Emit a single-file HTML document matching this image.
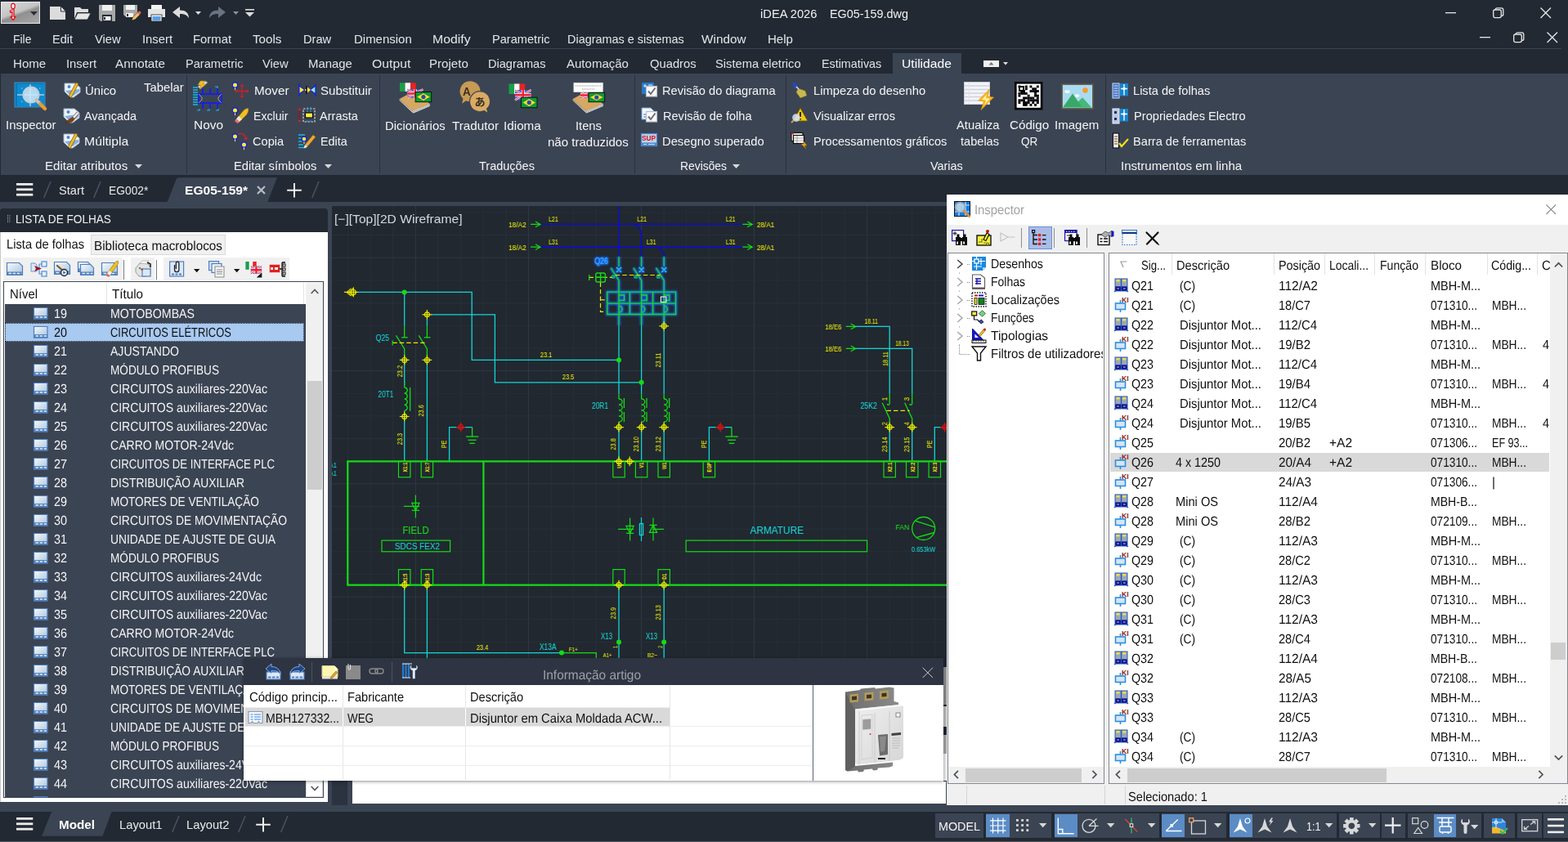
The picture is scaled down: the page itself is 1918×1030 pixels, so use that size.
<!DOCTYPE html>
<html lang="pt"><head><meta charset="utf-8"><title>iDEA 2026 EG05-159.dwg</title>
<style>
html,body{margin:0;padding:0;background:#222933;overflow:hidden}
body{width:1918px;height:1030px;position:relative;font-family:"Liberation Sans",sans-serif;font-size:15px}
#app{position:absolute;left:0;top:0;width:1918px;height:1030px;overflow:hidden;background:#222933}
#app div,#app svg{position:absolute}
.t{white-space:nowrap;line-height:20px;transform-origin:0 50%}
svg{overflow:visible}
svg text{font-family:"Liberation Sans",sans-serif}
</style></head><body><div id="app">
<div style="left:0px;top:0px;width:1918px;height:250px;background:#222933;"></div>
<div style="left:1px;top:2px;width:48px;height:27px;background:linear-gradient(160deg,#d9d9d9 0%,#c4c4c4 45%,#8f8f8f 55%,#a9a9a9 100%);border:1px solid #e8e8e8;box-sizing:border-box;"></div>
<svg style="left:1px;top:2px;" width="48" height="27" viewBox="0 0 48 27"><path d="M13 5.5 a2.2 2.2 0 1 1 4 0 a2.2 2.2 0 1 1 -4 0z" fill="#fff" stroke="#e0101a" stroke-width="1.3"/>
<path d="M11.5 11 l4.5 -1.5 v9 h2 l-3 4 l-3 -4 h2 v-6 l-2.5 .5z" fill="#fff" stroke="#e0101a" stroke-width="1.3" stroke-linejoin="round"/>
<path d="M36 12 h9 l-4.5 5z" fill="#2a2f3a"/></svg>
<svg style="left:60px;top:6px;" width="22" height="20" viewBox="0 0 22 20"><path d="M1 2 h13 l6 6 v10 h-19z" fill="#dcdcdc"/><path d="M14 2 v6 h6z" fill="#222933" opacity=".0"/><path d="M14.5 1.5 l6 6.5 h-6z" fill="#f4f4f4" stroke="#222933" stroke-width="1"/></svg>
<svg style="left:90px;top:6px;" width="22" height="20" viewBox="0 0 22 20"><path d="M1 3 h7 l2 2 h8 v4 h-14 l-3 8z" fill="#dcdcdc"/><path d="M5 10 h16 l-4 8 h-16z" fill="#e6e6e6" stroke="#222933" stroke-width=".8"/></svg>
<svg style="left:121px;top:6px;" width="20" height="20" viewBox="0 0 20 20"><path d="M0 0 h20 v20 h-18 l-2 -2z" fill="#a8a8a8"/><rect x="4" y="0" width="12" height="7" fill="#f0f0f0"/><rect x="4" y="12" width="12" height="8" fill="#222933"/><rect x="5.5" y="14" width="9" height="5" fill="#f4f4f4"/><rect x="6" y="15" width="2" height="3" fill="#222933"/></svg>
<svg style="left:151px;top:6px;" width="21" height="20" viewBox="0 0 21 20"><path d="M0 0 h17 v14 h-15 l-2 -2z" fill="#a8a8a8"/><rect x="3" y="0" width="11" height="6" fill="#f0f0f0"/><rect x="3" y="10" width="9" height="5" fill="#f4f4f4"/><rect x="4" y="11" width="2" height="3" fill="#222933"/><path d="M10 19 l1.5 -4 l6 -6 l2.8 2.8 l-6 6z" fill="#f0c060" stroke="#222933" stroke-width=".6"/><path d="M17 9.5 l1.3 -1.3 a1.5 1.5 0 0 1 2.6 2.6 l-1.2 1.3z" fill="#f06060"/></svg>
<svg style="left:181px;top:6px;" width="21" height="20" viewBox="0 0 21 20"><rect x="4" y="0" width="13" height="6" fill="#f4f4f4"/><path d="M0 5 h21 v10 h-21z" fill="#e4e4e4"/><rect x="4" y="12" width="13" height="8" fill="#f4f4f4" stroke="#222933" stroke-width=".8"/><rect x="5.5" y="14" width="10" height="5" fill="#5aa0e8"/></svg>
<svg style="left:211px;top:8px;" width="22" height="16" viewBox="0 0 22 16"><path d="M0 7 l9 -7 v4.5 c7 0 11 3 11 10 c-2 -4 -5 -5.5 -11 -5.5 v5z" fill="#dcdcdc"/></svg>
<svg style="left:239px;top:14px;" width="8" height="5" viewBox="0 0 8 5"><path d="M0 0 h7 l-3.5 4z" fill="#dcdcdc"/></svg>
<svg style="left:256px;top:8px;" width="22" height="16" viewBox="0 0 22 16"><path d="M20 7 l-9 -7 v4.5 c-7 0 -11 3 -11 10 c2 -4 5 -5.5 11 -5.5 v5z" fill="#6a7380"/></svg>
<svg style="left:285px;top:14px;" width="8" height="5" viewBox="0 0 8 5"><path d="M0 0 h7 l-3.5 4z" fill="#8a929e"/></svg>
<svg style="left:300px;top:10px;" width="12" height="11" viewBox="0 0 12 11"><rect x="0" y="1" width="11" height="1.6" fill="#dcdcdc"/><path d="M0 5 h11 l-5.5 5.5z" fill="#dcdcdc"/></svg>
<div class="t" style="left:929.5px;top:7.0px;color:#f0f0f0;transform:scaleX(0.980);">iDEA 2026</div>
<div class="t" style="left:1014.8px;top:7.0px;color:#f0f0f0;transform:scaleX(0.959);">EG05-159.dwg</div>
<svg style="left:1768px;top:15px;" width="14" height="2" viewBox="0 0 14 2"><rect x="0" y="0" width="13" height="1.3" fill="#e8e8e8"/></svg>
<svg style="left:1825.8px;top:9px;" width="14" height="14" viewBox="0 0 14 14"><rect x="0.7" y="3" width="9.6" height="9.6" rx="2" fill="none" stroke="#e8e8e8" stroke-width="1.3"/><path d="M3.2 3 v-0.2 a2 2 0 0 1 2 -2 h5.3 a2.3 2.3 0 0 1 2.3 2.3 v5.3 a2 2 0 0 1 -2 2" fill="none" stroke="#e8e8e8" stroke-width="1.3"/></svg>
<svg style="left:1884.2px;top:9px;" width="14" height="14" viewBox="0 0 14 14"><path d="M0.5 0.5 L13 13 M13 0.5 L0.5 13" stroke="#e8e8e8" stroke-width="1.3" fill="none"/></svg>
<svg style="left:1810px;top:45px;" width="14" height="2" viewBox="0 0 14 2"><rect x="0" y="0" width="13" height="1.3" fill="#e8e8e8"/></svg>
<svg style="left:1850.7px;top:39px;" width="14" height="14" viewBox="0 0 14 14"><rect x="0.7" y="3" width="9.6" height="9.6" rx="2" fill="none" stroke="#e8e8e8" stroke-width="1.3"/><path d="M3.2 3 v-0.2 a2 2 0 0 1 2 -2 h5.3 a2.3 2.3 0 0 1 2.3 2.3 v5.3 a2 2 0 0 1 -2 2" fill="none" stroke="#e8e8e8" stroke-width="1.3"/></svg>
<svg style="left:1892.2px;top:39px;" width="14" height="14" viewBox="0 0 14 14"><path d="M0.5 0.5 L13 13 M13 0.5 L0.5 13" stroke="#e8e8e8" stroke-width="1.3" fill="none"/></svg>
<div class="t" style="left:15.5px;top:37.7px;color:#e4e6ea;transform:scaleX(0.928);">File</div>
<div class="t" style="left:64.4px;top:37.7px;color:#e4e6ea;transform:scaleX(0.972);">Edit</div>
<div class="t" style="left:116.2px;top:37.7px;color:#e4e6ea;transform:scaleX(0.980);">View</div>
<div class="t" style="left:174.0px;top:37.7px;color:#e4e6ea;transform:scaleX(0.986);">Insert</div>
<div class="t" style="left:236.0px;top:37.7px;color:#e4e6ea;transform:scaleX(0.990);">Format</div>
<div class="t" style="left:309.0px;top:37.7px;color:#e4e6ea;transform:scaleX(1.012);">Tools</div>
<div class="t" style="left:371.3px;top:37.7px;color:#e4e6ea;transform:scaleX(0.977);">Draw</div>
<div class="t" style="left:432.5px;top:37.7px;color:#e4e6ea;transform:scaleX(0.998);">Dimension</div>
<div class="t" style="left:529.0px;top:37.7px;color:#e4e6ea;transform:scaleX(1.056);">Modify</div>
<div class="t" style="left:602.0px;top:37.7px;color:#e4e6ea;transform:scaleX(0.973);">Parametric</div>
<div class="t" style="left:693.5px;top:37.7px;color:#e4e6ea;transform:scaleX(0.962);">Diagramas e sistemas</div>
<div class="t" style="left:857.5px;top:37.7px;color:#e4e6ea;transform:scaleX(1.022);">Window</div>
<div class="t" style="left:938.5px;top:37.7px;color:#e4e6ea;transform:scaleX(1.003);">Help</div>
<div style="left:0px;top:59px;width:1910px;height:1px;background:#3b4453;"></div>
<div style="left:1092px;top:65px;width:84px;height:26px;background:#3b4453;"></div>
<div class="t" style="left:15.6px;top:67.7px;color:#dfe2e7;transform:scaleX(1.006);">Home</div>
<div class="t" style="left:80.9px;top:67.7px;color:#dfe2e7;transform:scaleX(0.986);">Insert</div>
<div class="t" style="left:141.4px;top:67.7px;color:#dfe2e7;transform:scaleX(1.017);">Annotate</div>
<div class="t" style="left:227.1px;top:67.7px;color:#dfe2e7;transform:scaleX(0.973);">Parametric</div>
<div class="t" style="left:320.9px;top:67.7px;color:#dfe2e7;transform:scaleX(0.980);">View</div>
<div class="t" style="left:376.9px;top:67.7px;color:#dfe2e7;transform:scaleX(0.994);">Manage</div>
<div class="t" style="left:454.9px;top:67.7px;color:#dfe2e7;transform:scaleX(1.050);">Output</div>
<div class="t" style="left:524.9px;top:67.7px;color:#dfe2e7;transform:scaleX(1.005);">Projeto</div>
<div class="t" style="left:597.2px;top:67.7px;color:#dfe2e7;transform:scaleX(0.971);">Diagramas</div>
<div class="t" style="left:693.3px;top:67.7px;color:#dfe2e7;transform:scaleX(1.001);">Automação</div>
<div class="t" style="left:795.1px;top:67.7px;color:#dfe2e7;transform:scaleX(0.984);">Quadros</div>
<div class="t" style="left:874.9px;top:67.7px;color:#dfe2e7;transform:scaleX(0.980);">Sistema eletrico</div>
<div class="t" style="left:1005.2px;top:67.7px;color:#dfe2e7;transform:scaleX(0.954);">Estimativas</div>
<div class="t" style="left:1103.1px;top:67.7px;color:#ffffff;transform:scaleX(1.044);">Utilidade</div>
<svg style="left:1203px;top:73px;" width="32" height="10" viewBox="0 0 32 10"><rect x="0" y="1" width="19" height="8" fill="#f0f0f0"/><path d="M6.5 6.5 l3 -3.5 l3 3.5z" fill="#777"/><path d="M24 3 h6 l-3 3.5z" fill="#e0e0e0"/></svg>
<div style="left:1px;top:90px;width:1917px;height:124px;background:#3b4453;"></div>
<div style="left:228px;top:92px;width:1px;height:120px;background:#2a313d;"></div>
<div style="left:464px;top:92px;width:1px;height:120px;background:#2a313d;"></div>
<div style="left:776px;top:92px;width:1px;height:120px;background:#2a313d;"></div>
<div style="left:961px;top:92px;width:1px;height:120px;background:#2a313d;"></div>
<div style="left:1352px;top:92px;width:1px;height:120px;background:#2a313d;"></div>
<svg style="left:17px;top:99px;" width="42" height="40" viewBox="0 0 42 40"><rect x="1" y="2" width="37" height="30" fill="#0a78b8" stroke="#3a8fc8" stroke-width="1"/>
<rect x="4" y="4" width="33" height="27" fill="#0e8ad0"/>
<path d="M20 4 v27 M4 17 h33" stroke="#e8f4ff" stroke-width="1"/>
<path d="M9 9 h24 M9 25 h24" stroke="#9fd4f4" stroke-width="1" stroke-dasharray="1.5 4"/>
<circle cx="21" cy="17" r="9.5" fill="#cfe8f8" fill-opacity=".85" stroke="#c8ccd4" stroke-width="2.2"/>
<path d="M28 24 l10 10" stroke="#e89a30" stroke-width="4.5" stroke-linecap="round"/>
<path d="M27 23 l4 4" stroke="#c0c4cc" stroke-width="3.5"/></svg>
<div class="t" style="left:7.0px;top:142.6px;color:#f4f4f4;transform:scaleX(0.997);">Inspector</div>
<svg style="left:78px;top:99px;" width="22" height="22" viewBox="0 0 22 22"><path d="M1 3 h13 l6 5 v6 l-8 6 h-4 l-7 -7z" fill="#eef3f8" stroke="#9fb0c4" stroke-width="1"/><path d="M2 12 l6 6 h4 l7 -5 v-3 z" fill="#86aede"/><circle cx="6.5" cy="7" r="2" fill="#4a86d0"/><path d="M6 19 l9 -17 l3 1.5 l-9 17z" fill="#f0c020" stroke="#8a5a10" stroke-width=".8"/><path d="M6 19 l0 3 l2.5 -1.5z" fill="#333"/></svg>
<div class="t" style="left:103.5px;top:100.5px;color:#f4f4f4;transform:scaleX(0.995);">Único</div>
<svg style="left:77px;top:130px;" width="22" height="22" viewBox="0 0 22 22"><path d="M1 3 h13 l6 5 v6 l-8 6 h-4 l-7 -7z" fill="#eef3f8" stroke="#9fb0c4" stroke-width="1"/><path d="M2 12 l6 6 h4 l7 -5 v-3 z" fill="#86aede"/><circle cx="6.5" cy="7" r="2" fill="#4a86d0"/><path d="M2 19 c4 -1 6 -4 9 -5 l6 -7 l2.5 2 l-6 7 c-1 4 -6 5 -11.5 3z" fill="#7a4216" stroke="#5a300c" stroke-width=".6"/><path d="M12 13 l5.5 -6 l2 1.8 l-5.5 6z" fill="#e8e8e8"/></svg>
<div class="t" style="left:102.7px;top:131.5px;color:#f4f4f4;transform:scaleX(0.963);">Avançada</div>
<svg style="left:77px;top:161px;" width="22" height="22" viewBox="0 0 22 22"><path d="M1 3 h13 l6 5 v6 l-8 6 h-4 l-7 -7z" fill="#eef3f8" stroke="#9fb0c4" stroke-width="1"/><path d="M2 12 l6 6 h4 l7 -5 v-3 z" fill="#86aede"/><circle cx="6.5" cy="7" r="2" fill="#4a86d0"/><path d="M6 19 l9 -17 l3 1.5 l-9 17z" fill="#f0c020" stroke="#8a5a10" stroke-width=".8"/><path d="M6 19 l0 3 l2.5 -1.5z" fill="#333"/></svg>
<div class="t" style="left:102.7px;top:162.5px;color:#f4f4f4;transform:scaleX(1.052);">Múltipla</div>
<div class="t" style="left:175.7px;top:96.6px;color:#f4f4f4;transform:scaleX(0.989);">Tabelar</div>
<div class="t" style="left:54.7px;top:192.5px;color:#f4f4f4;transform:scaleX(1.003);">Editar atributos</div>
<svg style="left:164.5px;top:200.5px;" width="10" height="6" viewBox="0 0 10 6"><path d="M0 0 h9 l-4.5 5z" fill="#d8d8d8"/></svg>
<svg style="left:233px;top:97px;" width="44" height="42" viewBox="0 0 44 42"><path d="M3 10 h6 M3 13 h6 M3 16 h6 M3 19 h6 M3 22 h6 M3 25 h6 M3 28 h6 M3 31 h6" stroke="#18b8e8" stroke-width="1.6"/>
<rect x="10" y="18" width="28" height="11" fill="#3b4453" stroke="#1420e8" stroke-width="1.8"/>
<path d="M15 18 v-7 M24 18 v-7 M33 18 v-7 M15 29 v7 M24 29 v7 M33 29 v7" stroke="#1420e8" stroke-width="1.8"/>
<path d="M10 18 l4 4 v3 l-4 4 M38 18 l-4 4 v3 l4 4" fill="none" stroke="#9a9ab8" stroke-width="1"/>
<path d="M8 38 h3 v-2 M20 38 h3 v-2 M31 38 h3 v-2 M30 9 h3 v2" stroke="#18b8e8" stroke-width="1.2" fill="none"/>
<path d="M9 9 l9 -7 l3 2 l-9 8z" fill="#d8d8d8" stroke="#888" stroke-width=".6"/><path d="M12 2 l6 0 l-3 4 l4 0 l-8 6 l2 -5 l-4 0z" fill="#f0c020" stroke="#a07010" stroke-width=".5"/></svg>
<div class="t" style="left:237.4px;top:142.6px;color:#f4f4f4;transform:scaleX(1.028);">Novo</div>
<svg style="left:283px;top:99px;" width="22" height="22" viewBox="0 0 22 22"><circle cx="4.5" cy="5" r="3.2" fill="#ffee20" stroke="#1420e8" stroke-width="1.4"/><path d="M4.5 8.2 v3" stroke="#d8d8d8" stroke-width="1"/><path d="M13 6 v13 M6.5 12.5 h13" stroke="#c8202c" stroke-width="1.4"/><path d="M13 3.5 l2.6 3.5 h-5.2z M13 21.5 l2.6 -3.5 h-5.2z M4 12.5 l3.5 -2.6 v5.2z M22 12.5 l-3.5 -2.6 v5.2z" fill="#c8202c"/></svg>
<div class="t" style="left:311.2px;top:100.5px;color:#f4f4f4;transform:scaleX(1.020);">Mover</div>
<svg style="left:283px;top:130px;" width="22" height="22" viewBox="0 0 22 22"><circle cx="4.5" cy="5" r="3.2" fill="#ffee20" stroke="#1420e8" stroke-width="1.4"/><path d="M4.5 8.2 v3" stroke="#d8d8d8" stroke-width="1"/><path d="M5 17 l10 -12 c2 -2 5 -3 6 -2 c0 3 -1 6 -3 8 l-9 9z" fill="#f0c020" stroke="#8a6a10" stroke-width=".6"/><path d="M5 17 l4 -5 l4 4 l-5 4z" fill="#e8e8e8"/><path d="M4 18 l2.5 -2.5 l3.5 3.5 l-2.5 2z" fill="#e87070"/></svg>
<div class="t" style="left:309.5px;top:131.5px;color:#f4f4f4;transform:scaleX(0.942);">Excluir</div>
<svg style="left:283px;top:161px;" width="22" height="22" viewBox="0 0 22 22"><circle cx="4.5" cy="6" r="3.2" fill="#ffee20" stroke="#1420e8" stroke-width="1.4"/><path d="M4.5 9.2 v3" stroke="#d8d8d8" stroke-width="1"/><circle cx="15.5" cy="16" r="3.2" fill="#ffee20" stroke="#1420e8" stroke-width="1.4"/><path d="M15.5 19.2 v3" stroke="#d8d8d8" stroke-width="1"/><path d="M8 3 c5 -2 9 1 10 6" fill="none" stroke="#e02020" stroke-width="1.3"/><path d="M18.8 10.5 l-3.6 -2 l4.5 -2z" fill="#e02020"/></svg>
<div class="t" style="left:309.2px;top:162.5px;color:#f4f4f4;transform:scaleX(0.974);">Copia</div>
<svg style="left:364px;top:100px;" width="24" height="20" viewBox="0 0 24 20"><path d="M2 2 v16 M2 5 l7 5 l-7 5z" fill="#ffee20" stroke="#1420e8" stroke-width="1.3"/><path d="M22 2 v16 M22 5 l-7 5 l7 5z" fill="#9ae8c0" stroke="#1420e8" stroke-width="1.3"/><path d="M9 10 h5" stroke="#ffee20" stroke-width="2"/><path d="M12 6.5 l4 3.5 l-4 3.5z" fill="#ffee20"/><path d="M11 5 v10" stroke="#101030" stroke-width="1.5"/></svg>
<div class="t" style="left:391.5px;top:100.5px;color:#f4f4f4;transform:scaleX(1.004);">Substituir</div>
<svg style="left:364px;top:130px;" width="24" height="22" viewBox="0 0 24 22"><path d="M2.5 4 v14" stroke="#a01010" stroke-width="1.2"/><path d="M2.5 2 l2 3 h-4z M2.5 20 l2 -3 h-4z" fill="#e02020"/><rect x="7" y="3" width="14" height="16" fill="none" stroke="#d8d8d8" stroke-width="1.2" stroke-dasharray="2.5 1.5"/><path d="M12 1 v20 M16 1 v20" stroke="#18a0e8" stroke-width="1.2" stroke-dasharray="2 2"/><rect x="9.5" y="8" width="9" height="6" fill="#ffee40" stroke="#101010" stroke-width="1.2"/></svg>
<div class="t" style="left:390.7px;top:131.5px;color:#f4f4f4;transform:scaleX(0.969);">Arrasta</div>
<svg style="left:364px;top:161px;" width="24" height="22" viewBox="0 0 24 22"><path d="M1 4 h8 M1 8 h5 M1 12 h5 M1 16 h6 M1 19.5 h10" stroke="#18b8e8" stroke-width="1.5"/><circle cx="8" cy="9" r="3" fill="#ffee20" stroke="#1420e8" stroke-width="1.4"/><path d="M8 12 v3" stroke="#d8d8d8" stroke-width="1"/><path d="M9 16 l10 -12 l3 2.5 l-10 12z" fill="#f0a838" stroke="#8a5a10" stroke-width=".6"/><path d="M9 16 l-1.5 4.5 l4.5 -2z" fill="#f4f4f4"/></svg>
<div class="t" style="left:391.5px;top:162.5px;color:#f4f4f4;transform:scaleX(0.958);">Edita</div>
<div class="t" style="left:285.5px;top:192.5px;color:#f4f4f4;transform:scaleX(0.981);">Editar símbolos</div>
<svg style="left:396.5px;top:200.5px;" width="10" height="6" viewBox="0 0 10 6"><path d="M0 0 h9 l-4.5 5z" fill="#d8d8d8"/></svg>
<svg style="left:487px;top:98px;" width="42" height="42" viewBox="0 0 42 42"><path d="M1.700 22.900 L21 12.500 L38.700 29 L18.400 37.400z" fill="#d6a862"/><path d="M1.700 22.900 L18.400 37.400 L38.700 29 V32 L18.400 40.600 L1.700 25z" fill="#e4e4e4"/><path d="M18.400 39 L38.700 30.500" stroke="#8a8a8a" stroke-width="1.600" stroke-dasharray="1 1"/><path d="M1.700 23.900 L18.400 38.600" stroke="#a07a3a" stroke-width="1"/><rect x="2" y="3.3" width="6.56667" height="10.5" fill="#18a048"/><rect x="8.56667" y="3.3" width="6.56667" height="10.5" fill="#fafafa"/><rect x="15.1333" y="3.3" width="6.56667" height="10.5" fill="#f02020"/><rect x="11.2" y="11.2" width="19.2" height="10.5" fill="#4858c8"/><path d="M11.2 11.2 l19.2 10.5 M30.4 11.2 l-19.2 10.5" stroke="#f4f4ff" stroke-width="2.2"/><path d="M11.2 11.2 l19.2 10.5 M30.4 11.2 l-19.2 10.5" stroke="#f02030" stroke-width="1"/><path d="M20.8 11.2 v10.5 M11.2 16.45 h19.2" stroke="#f4f4ff" stroke-width="4"/><path d="M20.8 11.2 v10.5 M11.2 16.45 h19.2" stroke="#f02030" stroke-width="2.4"/><rect x="21.2" y="14.5" width="19.5" height="12.2" fill="#109838" stroke="#0a1a0a" stroke-width="1"/><path d="M23.2 20.6 l7.75 -4.3 l7.75 4.3 l-7.75 4.3 z" fill="#f8e020"/><circle cx="30.95" cy="20.6" r="2.600" fill="#2848b8"/></svg>
<div class="t" style="left:470.7px;top:144.0px;color:#f4f4f4;transform:scaleX(0.992);">Dicionários</div>
<svg style="left:559px;top:98px;" width="42" height="42" viewBox="0 0 42 42"><path d="M16 1.200 a12.500 12.500 0 0 1 0 25 a12.500 12.500 0 0 1 -5 -1 l-5 3.500 l1.500 -6 a12.500 12.500 0 0 1 8.500 -21.500z" fill="#c79a55"/><path d="M28.100 13.700 a12.500 12.500 0 0 1 8.500 21.600 l2 5.500 l-5.500 -3.200 a12.500 12.500 0 1 1 -5 -23.900z" fill="#d8aa64" stroke="#3b4453" stroke-width="1.200"/></svg>
<div class="t" style="left:566.4px;top:101.6px;color:#3a3020;font-size:14px;transform:scaleX(0.967);font-weight:bold;">A</div>
<div class="t" style="left:580.5px;top:114.500px;color:#3a3020;font-size:13px;font-weight:bold;font-family:'Liberation Sans','Noto Sans CJK JP',sans-serif">あ</div>
<div class="t" style="left:552.7px;top:144.0px;color:#f4f4f4;transform:scaleX(1.017);">Tradutor</div>
<svg style="left:619px;top:98px;" width="42" height="42" viewBox="0 0 42 42"><rect x="3.5" y="4.5" width="6.56667" height="12.5" fill="#18a048"/><rect x="10.0667" y="4.5" width="6.56667" height="12.5" fill="#fafafa"/><rect x="16.6333" y="4.5" width="6.56667" height="12.5" fill="#f02020"/><rect x="11" y="12" width="19.5" height="12.5" fill="#4858c8"/><path d="M11 12 l19.5 12.5 M30.5 12 l-19.5 12.5" stroke="#f4f4ff" stroke-width="2.2"/><path d="M11 12 l19.5 12.5 M30.5 12 l-19.5 12.5" stroke="#f02030" stroke-width="1"/><path d="M20.75 12 v12.5 M11 18.25 h19.5" stroke="#f4f4ff" stroke-width="4"/><path d="M20.75 12 v12.5 M11 18.25 h19.5" stroke="#f02030" stroke-width="2.4"/><rect x="18.5" y="21.2" width="19.5" height="12.5" fill="#109838" stroke="#0a1a0a" stroke-width="1"/><path d="M20.5 27.45 l7.75 -4.45 l7.75 4.45 l-7.75 4.45 z" fill="#f8e020"/><circle cx="28.25" cy="27.45" r="2.600" fill="#2848b8"/></svg>
<div class="t" style="left:616.1px;top:144.0px;color:#f4f4f4;transform:scaleX(1.018);">Idioma</div>
<svg style="left:699px;top:98px;" width="42" height="42" viewBox="0 0 42 42"><path d="M1.700 22.900 L21 12.500 L38.700 29 L18.400 37.400z" fill="#d6a862"/><path d="M1.700 22.900 L18.400 37.400 L38.700 29 V32 L18.400 40.600 L1.700 25z" fill="#e4e4e4"/><path d="M18.400 39 L38.700 30.500" stroke="#8a8a8a" stroke-width="1.600" stroke-dasharray="1 1"/><path d="M1.700 23.900 L18.400 38.600" stroke="#a07a3a" stroke-width="1"/><rect x="2.900" y="3.300" width="35.400" height="11.200" fill="#fcfcfc" stroke="#d8d8d8" stroke-width=".800"/><path d="M5 7 h31 M13 11 h16" stroke="#8a8a8a" stroke-width="1" stroke-dasharray="1 1"/><rect x="11" y="15.4" width="19.3" height="6.3" fill="#4858c8"/><path d="M11 15.4 l19.3 6.3 M30.3 15.4 l-19.3 6.3" stroke="#f4f4ff" stroke-width="2.2"/><path d="M11 15.4 l19.3 6.3 M30.3 15.4 l-19.3 6.3" stroke="#f02030" stroke-width="1"/><path d="M20.65 15.4 v6.3 M11 18.55 h19.3" stroke="#f4f4ff" stroke-width="4"/><path d="M20.65 15.4 v6.3 M11 18.55 h19.3" stroke="#f02030" stroke-width="2.4"/><rect x="21" y="15.4" width="19.6" height="11.3" fill="#109838" stroke="#0a1a0a" stroke-width="1"/><path d="M23 21.05 l7.8 -3.85 l7.8 3.85 l-7.8 3.85 z" fill="#f8e020"/><circle cx="30.8" cy="21.05" r="2.600" fill="#2848b8"/></svg>
<div class="t" style="left:703.6px;top:144.0px;color:#f4f4f4;transform:scaleX(0.977);">Itens</div>
<div class="t" style="left:670.4px;top:163.5px;color:#f4f4f4;transform:scaleX(1.003);">não traduzidos</div>
<div class="t" style="left:586.3px;top:192.5px;color:#f4f4f4;transform:scaleX(0.966);">Traduções</div>
<svg style="left:784px;top:100px;" width="22" height="22" viewBox="0 0 22 22"><rect x="1" y="1" width="15" height="14" fill="#2878c8"/><path d="M3 5 h4 M5 3 v4 M9 4 h5" stroke="#e8f0ff" stroke-width="1"/><rect x="6.500" y="5.500" width="13" height="12.500" fill="#fafafa" stroke="#b8bcc8" stroke-width="1.200"/><path d="M9 11.500 l3 3.500 l5.500 -7.500" fill="none" stroke="#6a6e74" stroke-width="2"/></svg>
<div class="t" style="left:809.5px;top:101.0px;color:#f4f4f4;transform:scaleX(0.978);">Revisão do diagrama</div>
<svg style="left:784px;top:131px;" width="22" height="22" viewBox="0 0 22 22"><path d="M1 1 h11 l4 4 v10 h-15z" fill="#f4f8ff" stroke="#6aa0d8" stroke-width="1"/><path d="M3 9 h8 M3 12 h8" stroke="#2878c8" stroke-width="1.2"/><rect x="6.500" y="5.500" width="13" height="12.500" fill="#fafafa" stroke="#b8bcc8" stroke-width="1.200"/><path d="M9 11.500 l3 3.500 l5.500 -7.500" fill="none" stroke="#6a6e74" stroke-width="2"/></svg>
<div class="t" style="left:810.5px;top:132.0px;color:#f4f4f4;transform:scaleX(0.971);">Revisão de folha</div>
<svg style="left:784px;top:163px;" width="21" height="18" viewBox="0 0 21 18"><rect x="0.500" y="0.500" width="19" height="15" fill="#bcd2e8" stroke="#4a88d0" stroke-width="1.200"/><rect x="1" y="11.500" width="18" height="4" fill="#4a88d0"/><path d="M3 13.500 h4 M9 13.500 h8" stroke="#cfe0f8" stroke-width="1"/></svg>
<div class="t" style="left:784.7px;top:158.5px;color:#e01020;font-size:8.5px;font-weight:bold;transform:scaleX(0.973);">SUP</div>
<div class="t" style="left:809.5px;top:163.0px;color:#f4f4f4;transform:scaleX(0.984);">Desegno superado</div>
<div class="t" style="left:831.7px;top:192.5px;color:#f4f4f4;transform:scaleX(0.924);">Revisões</div>
<svg style="left:896px;top:200.5px;" width="10" height="6" viewBox="0 0 10 6"><path d="M0 0 h9 l-4.5 5z" fill="#d8d8d8"/></svg>
<svg style="left:967px;top:99px;" width="22" height="22" viewBox="0 0 22 22"><path d="M2 2 l5 1 l3 5 l-5 2z" fill="#2848c0"/><path d="M9 9 l9 3 l2 6 l-8 3 l-5 -7z" fill="#c8b850" stroke="#706820" stroke-width=".7"/><path d="M7 7 l3 3" stroke="#d8d8d8" stroke-width="1.6"/></svg>
<div class="t" style="left:995.2px;top:101.0px;color:#f4f4f4;transform:scaleX(0.985);">Limpeza do desenho</div>
<svg style="left:967px;top:130px;" width="24" height="22" viewBox="0 0 24 22"><path d="M12 2 l9 16 h-18z" fill="#f0c818" stroke="#705808" stroke-width="1"/><path d="M12 7 v6 M12 15 v1.6" stroke="#201808" stroke-width="1.8"/><circle cx="7" cy="14" r="4.2" fill="#d0e4f8" fill-opacity=".85" stroke="#c8ccd4" stroke-width="1.3"/><path d="M3.5 17.5 l-2.5 2.5" stroke="#c8a060" stroke-width="2"/></svg>
<div class="t" style="left:995.2px;top:132.0px;color:#f4f4f4;transform:scaleX(0.969);">Visualizar erros</div>
<svg style="left:967px;top:161px;" width="24" height="22" viewBox="0 0 24 22"><rect x="1" y="1.500" width="14" height="10" fill="#f8f8f8" stroke="#101010" stroke-width="1.200"/><rect x="3.500" y="4.500" width="13" height="10" fill="#f8f8f8" stroke="#101010" stroke-width="1.200"/><path d="M4 8 h12 M4 11 h12 M8 5 v9" stroke="#909090" stroke-width=".800"/><rect x="1" y="1.500" width="3" height="2" fill="#e03030"/><path d="M16 12 l4 5 l-3 0 l2 4 l-6 -6 l3 0z" fill="#f0a818" stroke="#a06808" stroke-width=".5"/></svg>
<div class="t" style="left:994.5px;top:163.0px;color:#f4f4f4;transform:scaleX(0.970);">Processamentos gráficos</div>
<svg style="left:1179px;top:100px;" width="40" height="40" viewBox="0 0 40 40"><rect x="0.500" y="0.500" width="31" height="27" fill="#f4f4f8" stroke="#c8ccd4" stroke-width="1"/><path d="M1 5 h30 M1 9.500 h30 M1 14 h30 M1 18.500 h30 M1 23 h30" stroke="#cdd2dc" stroke-width="1.600"/><path d="M6 1 v26" stroke="#e0e4ea" stroke-width="1"/><path d="M31.500 9 l-14 14 l7 1 l-3.500 10.500 l15.500 -15.500 l-7.500 -1 z" fill="#f8b418" stroke="#e09010" stroke-width=".600"/><path d="M28 15 l-6 7 l5 .500 l-2 6 l7 -8 l-5 -.500z" fill="#fff0a0"/></svg>
<div class="t" style="left:1170.2px;top:143.0px;color:#f4f4f4;transform:scaleX(0.985);">Atualiza</div>
<div class="t" style="left:1174.5px;top:163.0px;color:#f4f4f4;transform:scaleX(0.972);">tabelas</div>
<svg style="left:1241.4px;top:100.1px;" width="34.4" height="34.4" viewBox="0 0 34.4 34.4"><rect x="0" y="0" width="34.400" height="34.400" fill="#000"/><rect x="2.600" y="2.600" width="29.200" height="29.200" fill="#fff"/><rect x="4.5" y="4.5" width="2.900" height="2.900" fill="#000"/><rect x="4.5" y="12.9" width="2.900" height="2.900" fill="#000"/><rect x="4.5" y="15.7" width="2.900" height="2.900" fill="#000"/><rect x="4.5" y="21.3" width="2.900" height="2.900" fill="#000"/><rect x="4.5" y="24.1" width="2.900" height="2.900" fill="#000"/><rect x="7.3" y="7.3" width="2.900" height="2.900" fill="#000"/><rect x="7.3" y="10.1" width="2.900" height="2.900" fill="#000"/><rect x="7.3" y="12.9" width="2.900" height="2.900" fill="#000"/><rect x="7.3" y="21.3" width="2.900" height="2.900" fill="#000"/><rect x="10.1" y="10.1" width="2.900" height="2.900" fill="#000"/><rect x="10.1" y="12.9" width="2.900" height="2.900" fill="#000"/><rect x="10.1" y="18.5" width="2.900" height="2.900" fill="#000"/><rect x="10.1" y="21.3" width="2.900" height="2.900" fill="#000"/><rect x="10.1" y="24.1" width="2.900" height="2.900" fill="#000"/><rect x="10.1" y="26.9" width="2.900" height="2.900" fill="#000"/><rect x="12.9" y="4.5" width="2.900" height="2.900" fill="#000"/><rect x="12.9" y="7.3" width="2.900" height="2.900" fill="#000"/><rect x="12.9" y="12.9" width="2.900" height="2.900" fill="#000"/><rect x="12.9" y="18.5" width="2.900" height="2.900" fill="#000"/><rect x="12.9" y="24.1" width="2.900" height="2.900" fill="#000"/><rect x="12.9" y="26.9" width="2.900" height="2.900" fill="#000"/><rect x="15.7" y="15.7" width="2.900" height="2.900" fill="#000"/><rect x="15.7" y="18.5" width="2.900" height="2.900" fill="#000"/><rect x="15.7" y="21.3" width="2.900" height="2.900" fill="#000"/><rect x="15.7" y="24.1" width="2.900" height="2.900" fill="#000"/><rect x="18.5" y="4.5" width="2.900" height="2.900" fill="#000"/><rect x="18.5" y="10.1" width="2.900" height="2.900" fill="#000"/><rect x="18.5" y="18.5" width="2.900" height="2.900" fill="#000"/><rect x="18.5" y="21.3" width="2.900" height="2.900" fill="#000"/><rect x="18.5" y="26.9" width="2.900" height="2.900" fill="#000"/><rect x="21.3" y="7.3" width="2.900" height="2.900" fill="#000"/><rect x="21.3" y="10.1" width="2.900" height="2.900" fill="#000"/><rect x="21.3" y="18.5" width="2.900" height="2.900" fill="#000"/><rect x="21.3" y="21.3" width="2.900" height="2.900" fill="#000"/><rect x="21.3" y="24.1" width="2.900" height="2.900" fill="#000"/><rect x="24.1" y="7.3" width="2.900" height="2.900" fill="#000"/><rect x="24.1" y="10.1" width="2.900" height="2.900" fill="#000"/><rect x="24.1" y="12.9" width="2.900" height="2.900" fill="#000"/><rect x="24.1" y="15.7" width="2.900" height="2.900" fill="#000"/><rect x="24.1" y="21.3" width="2.900" height="2.900" fill="#000"/><rect x="24.1" y="26.9" width="2.900" height="2.900" fill="#000"/><rect x="26.9" y="4.5" width="2.900" height="2.900" fill="#000"/><rect x="26.9" y="10.1" width="2.900" height="2.900" fill="#000"/><rect x="26.9" y="15.7" width="2.900" height="2.900" fill="#000"/><rect x="26.9" y="18.5" width="2.900" height="2.900" fill="#000"/><rect x="26.9" y="21.3" width="2.900" height="2.900" fill="#000"/><rect x="26.9" y="24.1" width="2.900" height="2.900" fill="#000"/><rect x="5" y="5" width="7" height="7" fill="#000"/><rect x="7" y="7" width="3" height="3" fill="#fff"/></svg>
<div class="t" style="left:1234.9px;top:143.0px;color:#f4f4f4;transform:scaleX(1.013);">Código</div>
<div class="t" style="left:1249.2px;top:163.0px;color:#f4f4f4;transform:scaleX(0.901);">QR</div>
<svg style="left:1298px;top:101.5px;" width="40" height="32" viewBox="0 0 40 32"><rect x="1" y="1" width="38" height="30" fill="#a9dcf0" stroke="#5c5444" stroke-width="1.800"/><circle cx="29.500" cy="8.500" r="3.300" fill="#f89830"/><path d="M2 29.500 l12 -17 l7 10 l5 -5 l11 12z" fill="#38a868"/><path d="M21 22.500 l5 -5 l11 12 h-11z" fill="#48b878"/><ellipse cx="7.500" cy="10" rx="3.300" ry="1.800" fill="#fff"/><ellipse cx="19.500" cy="15" rx="2.800" ry="1.800" fill="#fff"/></svg>
<div class="t" style="left:1290.2px;top:143.0px;color:#f4f4f4;transform:scaleX(1.001);">Imagem</div>
<div class="t" style="left:1137.6px;top:192.5px;color:#f4f4f4;transform:scaleX(0.961);">Varias</div>
<svg style="left:1360px;top:101px;" width="22" height="20" viewBox="0 0 22 20"><rect x="1" y="1" width="8" height="18" fill="#3a70c8" stroke="#cfe0f8" stroke-width="1"/><path d="M2.5 4 h5 M2.5 7 h5 M2.5 10 h5 M2.5 13 h5 M2.5 16 h5" stroke="#e8f0ff" stroke-width="1"/><rect x="10" y="1" width="10" height="15.500" fill="#1484d0"/><path d="M15 2 v13.500 M11 7.500 h8" stroke="#f8f8ff" stroke-width="1.400"/><circle cx="15" cy="7.500" r="1.700" fill="#fff"/></svg>
<div class="t" style="left:1385.5px;top:101.0px;color:#f4f4f4;transform:scaleX(0.974);">Lista de folhas</div>
<svg style="left:1360px;top:132px;" width="22" height="20" viewBox="0 0 22 20"><rect x="1" y="1" width="8" height="18" fill="#b8c8e0" stroke="#e8f0ff" stroke-width="1"/><rect x="3" y="4" width="3" height="3" fill="#203060"/><rect x="3" y="12" width="3" height="3" fill="#203060"/><rect x="10" y="1" width="10" height="15.500" fill="#1484d0"/><path d="M15 2 v13.500 M11 7.500 h8" stroke="#f8f8ff" stroke-width="1.400"/><circle cx="15" cy="7.500" r="1.700" fill="#fff"/></svg>
<div class="t" style="left:1386.5px;top:132.0px;color:#f4f4f4;transform:scaleX(0.975);">Propriedades Electro</div>
<svg style="left:1360px;top:162px;" width="22" height="21" viewBox="0 0 22 21"><rect x="1.5" y="1" width="7" height="18" fill="#f8f0e0" stroke="#101030" stroke-width="1.2"/><path d="M3 5 h4 M3 8 h4 M3 11 h4 M3 14 h4" stroke="#604020" stroke-width="1.2"/><path d="M9 13 l3 4 l8 -9" fill="none" stroke="#f0e020" stroke-width="2.2"/></svg>
<div class="t" style="left:1385.5px;top:163.0px;color:#f4f4f4;transform:scaleX(0.975);">Barra de ferramentas</div>
<div class="t" style="left:1370.5px;top:193.0px;color:#f4f4f4;transform:scaleX(1.004);">Instrumentos em linha</div>
<div style="left:0px;top:214px;width:1918px;height:33px;background:#222933;"></div>
<div style="left:0px;top:247px;width:1918px;height:740px;background:#3b4453;"></div>
<svg style="left:200px;top:214px;" width="145" height="34" viewBox="0 0 145 34"><path d="M4.7 33 L15.6 5.2 Q16.6 3.2 18.8 3.2 L139 3.2 L127.3 33z" fill="#3b4453"/></svg>
<svg style="left:19.9px;top:224.2px;" width="21" height="16" viewBox="0 0 21 16"><rect x="0" y="0" width="20.300" height="2.800" fill="#ececec"/><rect x="0" y="6.400" width="20.300" height="2.800" fill="#ececec"/><rect x="0" y="12.800" width="20.300" height="2.800" fill="#ececec"/></svg>
<svg style="left:53px;top:222px;" width="10" height="21" viewBox="0 0 10 21"><path d="M0.700 20 L9 0" stroke="#4a5363" stroke-width="1.500"/></svg>
<svg style="left:113.5px;top:222px;" width="10" height="21" viewBox="0 0 10 21"><path d="M0.700 20 L9 0" stroke="#4a5363" stroke-width="1.500"/></svg>
<svg style="left:380.5px;top:222px;" width="10" height="21" viewBox="0 0 10 21"><path d="M0.700 20 L9 0" stroke="#4a5363" stroke-width="1.500"/></svg>
<div class="t" style="left:71.7px;top:223.0px;color:#e8e8e8;transform:scaleX(0.978);">Start</div>
<div class="t" style="left:133.0px;top:223.0px;color:#e8e8e8;transform:scaleX(0.921);">EG002*</div>
<div class="t" style="left:226.0px;top:223.0px;color:#ffffff;font-weight:bold;transform:scaleX(1.038);">EG05-159*</div>
<svg style="left:313.5px;top:227.3px;" width="11" height="11" viewBox="0 0 11 11"><path d="M1 1 L10 10 M10 1 L1 10" stroke="#b8bcc4" stroke-width="2.2"/></svg>
<svg style="left:351px;top:223.5px;" width="18" height="18" viewBox="0 0 18 18"><path d="M9 0 v17.5 M0.2 8.7 h17.6" stroke="#f0f0f0" stroke-width="2"/></svg>
<div style="left:0px;top:255px;width:401px;height:30px;background:#222933;border-radius:4px 4px 0 0;"></div>
<svg style="left:8.5px;top:263px;" width="4" height="10" viewBox="0 0 4 10"><path d="M0.5 0 v10 M2.8 0 v10" stroke="#aab0ba" stroke-width="1" stroke-dasharray="1 1"/></svg>
<div class="t" style="left:18.7px;top:258.0px;color:#f0f0f0;transform:scaleX(0.907);">LISTA DE FOLHAS</div>
<div style="left:0px;top:283.5px;width:401px;height:697.5px;background:#ffffff;"></div>
<div style="left:0px;top:283.5px;width:1.2px;height:697.5px;background:#c9c9c9;"></div>
<div style="left:110.5px;top:286.5px;width:165px;height:25px;background:#f0f0f0;border:1px solid #d9d9d9;box-sizing:border-box;"></div>
<div class="t" style="left:7.7px;top:290px;color:#111;font-size:16px;text-rendering:geometricPrecision;transform:scaleX(0.921);">Lista de folhas</div>
<div class="t" style="left:114.8px;top:292px;color:#111;font-size:16px;text-rendering:geometricPrecision;transform:scaleX(0.954);">Biblioteca macroblocos</div>
<div style="left:4.4px;top:315px;width:144.5px;height:28px;background:#f0f0f0;"></div>
<div style="left:159.8px;top:315px;width:29px;height:28px;background:#f0f0f0;"></div>
<div style="left:200.4px;top:315px;width:153.2px;height:28px;background:#f0f0f0;"></div>
<div style="left:151px;top:317.5px;width:1px;height:24px;background:#7a7a7a;"></div>
<div style="left:191px;top:317.5px;width:1px;height:24px;background:#7a7a7a;"></div>
<svg width="0" height="0" style="left:0;top:0"><defs><linearGradient id="shg" x1="0" y1="0" x2="1" y2="1"><stop offset="0" stop-color="#f6fafd"/><stop offset="1" stop-color="#a9c3da"/></linearGradient></defs></svg>
<svg style="left:8px;top:320px;" width="20" height="18" viewBox="0 0 20 18"><path d="M0.5 1.5 h15 l4 4 v11 h-19 z" fill="url(#shg)" stroke="#4f7fbe" stroke-width="1.2"/><rect x="0.5" y="12.5" width="19" height="4" fill="#4f7fbe"/><path d="M2.5 14.5 h16" stroke="#e8f0fa" stroke-width="1.5" stroke-dasharray="3.5 1.6"/></svg>
<svg style="left:36.5px;top:318px;" width="21" height="22" viewBox="0 0 21 22"><path d="M1 4 h5 l2 2 v8 h-7z" fill="#dce8f4" stroke="#6a98d0" stroke-width="1"/><rect x="14" y="2" width="6" height="6" fill="#e8f0fa" stroke="#4f8fd8" stroke-width="1.2"/><rect x="14" y="14" width="6" height="6" fill="#e8f0fa" stroke="#4f8fd8" stroke-width="1.2"/><path d="M11 5 h4 M11 5 v12 h4" fill="none" stroke="#4f8fd8" stroke-width="1.2"/><path d="M5 7 l9 3.5 l-9 3.5 l2 -3.5z" fill="#a01020"/></svg>
<svg style="left:65.5px;top:320px;" width="21" height="19" viewBox="0 0 21 19"><path d="M0.5 0.5 h15 l4 4 v11 h-19 z" fill="url(#shg)" stroke="#4f7fbe" stroke-width="1.2"/><rect x="0.5" y="11.5" width="19" height="4" fill="#4f7fbe"/><path d="M2.5 13.5 h16" stroke="#e8f0fa" stroke-width="1.5" stroke-dasharray="3.5 1.6"/><path d="M4 5 l8 7" stroke="#8a5020" stroke-width="2.2" stroke-linecap="round"/><circle cx="12.5" cy="13.5" r="4" fill="#e8f0ff" stroke="#202028" stroke-width="1.4"/><path d="M11.3 11.5 l3.2 2 l-3.2 2z" fill="#3060c0"/></svg>
<svg style="left:94.5px;top:320px;" width="21" height="19" viewBox="0 0 21 19"><path d="M0.5 0.5 h12 l4 4 v8 h-16 z" fill="url(#shg)" stroke="#4f7fbe" stroke-width="1.2"/><rect x="0.5" y="8.5" width="16" height="4" fill="#4f7fbe"/><path d="M2.5 10.5 h13" stroke="#e8f0fa" stroke-width="1.5" stroke-dasharray="3.5 1.6"/><path d="M3.5 3.5 h12 l4 4 v9 h-16 z" fill="url(#shg)" stroke="#4f7fbe" stroke-width="1.2"/><rect x="3.5" y="12.5" width="16" height="4" fill="#4f7fbe"/><path d="M5.5 14.5 h13" stroke="#e8f0fa" stroke-width="1.5" stroke-dasharray="3.5 1.6"/></svg>
<svg style="left:123.5px;top:318px;" width="22" height="22" viewBox="0 0 22 22"><path d="M0.5 3.5 h15 l4 4 v11 h-19 z" fill="url(#shg)" stroke="#4f7fbe" stroke-width="1.2"/><rect x="0.5" y="14.5" width="19" height="4" fill="#4f7fbe"/><path d="M2.5 16.5 h16" stroke="#e8f0fa" stroke-width="1.5" stroke-dasharray="3.5 1.6"/><path d="M6 18 l10 -14 c1.5 -2 3 -3 4.5 -2.5 c0.5 1.5 0 3.5 -1.5 5.5 l-9.5 13z" fill="#f0c020" stroke="#8a6a10" stroke-width=".6"/><path d="M6 18 l3.5 -5 l3.5 2.7 l-4 5z" fill="#e8f4f4"/><path d="M5.2 19 l2 -2.6 l3.4 2.6 l-1.6 2z" fill="#e86868"/></svg>
<svg style="left:163.5px;top:318px;" width="22" height="22" viewBox="0 0 22 22"><path d="M2 10 l5 -6 h9 l4 5 v8 l-6 3 h-8 l-4 -5z" fill="#e4e4e4" stroke="#9a9a9a" stroke-width="1"/><path d="M7 4 l3 -3 h8 l-2 4z" fill="#fff" stroke="#aaa" stroke-width=".8"/><path d="M16 3 l4 2 v4" fill="none" stroke="#202020" stroke-width="1.6"/><rect x="10" y="11" width="10" height="9" fill="#dce8f4" stroke="#4f7fbe" stroke-width="1.2"/><circle cx="7" cy="10" r="1.2" fill="#20b040"/><circle cx="9.5" cy="11.5" r="1.2" fill="#e02020"/></svg>
<svg style="left:206.5px;top:318px;" width="20" height="22" viewBox="0 0 20 22"><rect x="0.6" y="2" width="17" height="18" fill="#dce8f8" stroke="#4f7fbe" stroke-width="1.2"/><path d="M3 17.5 h12" stroke="#4f7fbe" stroke-width="2.2" stroke-dasharray="3 1.5"/><path d="M6.5 6 v6 a2.7 2.7 0 0 0 5.4 0 v-8 a1.8 1.8 0 0 0 -3.6 0 v7" fill="none" stroke="#202028" stroke-width="1.3"/></svg>
<svg style="left:237px;top:329px;" width="9" height="5" viewBox="0 0 9 5"><path d="M0 0 h7.4 l-3.7 4.2z" fill="#101010"/></svg>
<svg style="left:254.5px;top:319px;" width="21" height="21" viewBox="0 0 21 21"><rect x="0.6" y="0.6" width="12" height="11" fill="#dce8f8" stroke="#4f7fbe" stroke-width="1.2"/><rect x="4" y="3.5" width="12" height="11" fill="#e8f0fa" stroke="#4f7fbe" stroke-width="1.2"/><rect x="8" y="7" width="11" height="13" fill="#f4f4f4" stroke="#8a8a8a" stroke-width="1"/><path d="M10 11 h7 M10 13.5 h7 M10 16 h7" stroke="#8a8a8a" stroke-width="1"/></svg>
<svg style="left:285.5px;top:329px;" width="9" height="5" viewBox="0 0 9 5"><path d="M0 0 h7.4 l-3.7 4.2z" fill="#101010"/></svg>
<svg style="left:300px;top:319px;" width="21" height="21" viewBox="0 0 21 21"><rect x="0.4" y="1" width="4.43333" height="9.8" fill="#18a048"/><rect x="4.83333" y="1" width="4.43333" height="9.8" fill="#fafafa"/><rect x="9.26667" y="1" width="4.43333" height="9.8" fill="#f02020"/><rect x="6.8" y="6.5" width="13.3" height="9.5" fill="#4858c8"/><path d="M6.8 6.5 l13.3 9.5 M20.1 6.5 l-13.3 9.5" stroke="#f4f4ff" stroke-width="2.2"/><path d="M6.8 6.5 l13.3 9.5 M20.1 6.5 l-13.3 9.5" stroke="#f02030" stroke-width="1"/><path d="M13.45 6.5 v9.5 M6.8 11.25 h13.3" stroke="#f4f4ff" stroke-width="4"/><path d="M13.45 6.5 v9.5 M6.8 11.25 h13.3" stroke="#f02030" stroke-width="2.4"/><path d="M20.300 14.500 v6 h-6.500z" fill="#101010"/></svg>
<svg style="left:329px;top:320px;" width="21" height="19" viewBox="0 0 21 19"><rect x="0.5" y="3.500" width="13" height="10" fill="#e02020" stroke="#f8d0d0" stroke-width=".8"/><path d="M2 7 h3 v3 h-3z M7 7 h4 v3 h-4z" fill="#fff"/><path d="M13 9 h3 M16 1 v17 M16 1 h4 M16 18 h4" stroke="#101010" stroke-width="1.3" fill="none"/><rect x="17" y="3" width="3" height="3" fill="none" stroke="#101010" stroke-width="1"/><rect x="17" y="8" width="3" height="3" fill="none" stroke="#101010" stroke-width="1"/><rect x="17" y="13" width="3" height="3" fill="none" stroke="#101010" stroke-width="1"/></svg>
<div style="left:4.3px;top:344.2px;width:392.2px;height:632.3px;background:#ffffff;border:1.6px solid #3b4453;box-sizing:border-box;"></div>
<div style="left:130px;top:346px;width:1px;height:26px;background:#e3e3e3;"></div>
<div style="left:371.3px;top:346px;width:1px;height:26px;background:#e3e3e3;"></div>
<div class="t" style="left:11.8px;top:351px;color:#111;font-size:16px;text-rendering:geometricPrecision;transform:scaleX(0.933);">Nível</div>
<div class="t" style="left:136.6px;top:351px;color:#111;font-size:16px;text-rendering:geometricPrecision;transform:scaleX(0.950);">Título</div>
<div style="left:5.9px;top:372px;width:368.2px;height:603px;background:#3b4453;"></div>
<div style="left:5.9px;top:395px;width:366.3px;height:23px;background:#a8c9f0;outline:1px dotted #10141c;outline-offset:-1px;"></div>
<svg style="left:41.3px;top:375.5px;" width="18" height="15" viewBox="0 0 18 15"><path d="M0.5 0.5 h16.5 v13.6 h-16.5 z" fill="url(#shg)" stroke="#4f7fbe" stroke-width="1.2"/><rect x="0.5" y="10.1" width="16.5" height="4" fill="#4f7fbe"/><path d="M2.5 12.1 h13.5" stroke="#e8f0fa" stroke-width="1.5" stroke-dasharray="3.5 1.6"/></svg>
<div class="t" style="left:65.8px;top:375px;color:#f4f4f4;font-size:16px;text-rendering:geometricPrecision;transform:scaleX(0.899);">19</div>
<div class="t" style="left:135.0px;top:375px;color:#f4f4f4;font-size:16px;text-rendering:geometricPrecision;transform:scaleX(0.887);">MOTOBOMBAS</div>
<svg style="left:41.3px;top:398.5px;" width="18" height="15" viewBox="0 0 18 15"><path d="M0.5 0.5 h16.5 v13.6 h-16.5 z" fill="url(#shg)" stroke="#4f7fbe" stroke-width="1.2"/><rect x="0.5" y="10.1" width="16.5" height="4" fill="#4f7fbe"/><path d="M2.5 12.1 h13.5" stroke="#e8f0fa" stroke-width="1.5" stroke-dasharray="3.5 1.6"/></svg>
<div class="t" style="left:65.8px;top:398px;color:#101010;font-size:16px;text-rendering:geometricPrecision;transform:scaleX(0.899);">20</div>
<div class="t" style="left:135.0px;top:398px;color:#101010;font-size:16px;text-rendering:geometricPrecision;transform:scaleX(0.809);">CIRCUITOS ELÉTRICOS</div>
<svg style="left:41.3px;top:421.5px;" width="18" height="15" viewBox="0 0 18 15"><path d="M0.5 0.5 h16.5 v13.6 h-16.5 z" fill="url(#shg)" stroke="#4f7fbe" stroke-width="1.2"/><rect x="0.5" y="10.1" width="16.5" height="4" fill="#4f7fbe"/><path d="M2.5 12.1 h13.5" stroke="#e8f0fa" stroke-width="1.5" stroke-dasharray="3.5 1.6"/></svg>
<div class="t" style="left:65.8px;top:421px;color:#f4f4f4;font-size:16px;text-rendering:geometricPrecision;transform:scaleX(0.899);">21</div>
<div class="t" style="left:135.0px;top:421px;color:#f4f4f4;font-size:16px;text-rendering:geometricPrecision;transform:scaleX(0.878);">AJUSTANDO</div>
<svg style="left:41.3px;top:444.5px;" width="18" height="15" viewBox="0 0 18 15"><path d="M0.5 0.5 h16.5 v13.6 h-16.5 z" fill="url(#shg)" stroke="#4f7fbe" stroke-width="1.2"/><rect x="0.5" y="10.1" width="16.5" height="4" fill="#4f7fbe"/><path d="M2.5 12.1 h13.5" stroke="#e8f0fa" stroke-width="1.5" stroke-dasharray="3.5 1.6"/></svg>
<div class="t" style="left:65.8px;top:444px;color:#f4f4f4;font-size:16px;text-rendering:geometricPrecision;transform:scaleX(0.899);">22</div>
<div class="t" style="left:135.0px;top:444px;color:#f4f4f4;font-size:16px;text-rendering:geometricPrecision;transform:scaleX(0.850);">MÓDULO PROFIBUS</div>
<svg style="left:41.3px;top:467.5px;" width="18" height="15" viewBox="0 0 18 15"><path d="M0.5 0.5 h16.5 v13.6 h-16.5 z" fill="url(#shg)" stroke="#4f7fbe" stroke-width="1.2"/><rect x="0.5" y="10.1" width="16.5" height="4" fill="#4f7fbe"/><path d="M2.5 12.1 h13.5" stroke="#e8f0fa" stroke-width="1.5" stroke-dasharray="3.5 1.6"/></svg>
<div class="t" style="left:65.8px;top:467px;color:#f4f4f4;font-size:16px;text-rendering:geometricPrecision;transform:scaleX(0.899);">23</div>
<div class="t" style="left:135.0px;top:467px;color:#f4f4f4;font-size:16px;text-rendering:geometricPrecision;transform:scaleX(0.880);">CIRCUITOS auxiliares-220Vac</div>
<svg style="left:41.3px;top:490.5px;" width="18" height="15" viewBox="0 0 18 15"><path d="M0.5 0.5 h16.5 v13.6 h-16.5 z" fill="url(#shg)" stroke="#4f7fbe" stroke-width="1.2"/><rect x="0.5" y="10.1" width="16.5" height="4" fill="#4f7fbe"/><path d="M2.5 12.1 h13.5" stroke="#e8f0fa" stroke-width="1.5" stroke-dasharray="3.5 1.6"/></svg>
<div class="t" style="left:65.8px;top:490px;color:#f4f4f4;font-size:16px;text-rendering:geometricPrecision;transform:scaleX(0.899);">24</div>
<div class="t" style="left:135.0px;top:490px;color:#f4f4f4;font-size:16px;text-rendering:geometricPrecision;transform:scaleX(0.880);">CIRCUITOS auxiliares-220Vac</div>
<svg style="left:41.3px;top:513.5px;" width="18" height="15" viewBox="0 0 18 15"><path d="M0.5 0.5 h16.5 v13.6 h-16.5 z" fill="url(#shg)" stroke="#4f7fbe" stroke-width="1.2"/><rect x="0.5" y="10.1" width="16.5" height="4" fill="#4f7fbe"/><path d="M2.5 12.1 h13.5" stroke="#e8f0fa" stroke-width="1.5" stroke-dasharray="3.5 1.6"/></svg>
<div class="t" style="left:65.8px;top:513px;color:#f4f4f4;font-size:16px;text-rendering:geometricPrecision;transform:scaleX(0.899);">25</div>
<div class="t" style="left:135.0px;top:513px;color:#f4f4f4;font-size:16px;text-rendering:geometricPrecision;transform:scaleX(0.880);">CIRCUITOS auxiliares-220Vac</div>
<svg style="left:41.3px;top:536.5px;" width="18" height="15" viewBox="0 0 18 15"><path d="M0.5 0.5 h16.5 v13.6 h-16.5 z" fill="url(#shg)" stroke="#4f7fbe" stroke-width="1.2"/><rect x="0.5" y="10.1" width="16.5" height="4" fill="#4f7fbe"/><path d="M2.5 12.1 h13.5" stroke="#e8f0fa" stroke-width="1.5" stroke-dasharray="3.5 1.6"/></svg>
<div class="t" style="left:65.8px;top:536px;color:#f4f4f4;font-size:16px;text-rendering:geometricPrecision;transform:scaleX(0.899);">26</div>
<div class="t" style="left:135.0px;top:536px;color:#f4f4f4;font-size:16px;text-rendering:geometricPrecision;transform:scaleX(0.877);">CARRO MOTOR-24Vdc</div>
<svg style="left:41.3px;top:559.5px;" width="18" height="15" viewBox="0 0 18 15"><path d="M0.5 0.5 h16.5 v13.6 h-16.5 z" fill="url(#shg)" stroke="#4f7fbe" stroke-width="1.2"/><rect x="0.5" y="10.1" width="16.5" height="4" fill="#4f7fbe"/><path d="M2.5 12.1 h13.5" stroke="#e8f0fa" stroke-width="1.5" stroke-dasharray="3.5 1.6"/></svg>
<div class="t" style="left:65.8px;top:559px;color:#f4f4f4;font-size:16px;text-rendering:geometricPrecision;transform:scaleX(0.899);">27</div>
<div class="t" style="left:135.0px;top:559px;color:#f4f4f4;font-size:16px;text-rendering:geometricPrecision;transform:scaleX(0.823);">CIRCUITOS DE INTERFACE PLC</div>
<svg style="left:41.3px;top:582.5px;" width="18" height="15" viewBox="0 0 18 15"><path d="M0.5 0.5 h16.5 v13.6 h-16.5 z" fill="url(#shg)" stroke="#4f7fbe" stroke-width="1.2"/><rect x="0.5" y="10.1" width="16.5" height="4" fill="#4f7fbe"/><path d="M2.5 12.1 h13.5" stroke="#e8f0fa" stroke-width="1.5" stroke-dasharray="3.5 1.6"/></svg>
<div class="t" style="left:65.8px;top:582px;color:#f4f4f4;font-size:16px;text-rendering:geometricPrecision;transform:scaleX(0.899);">28</div>
<div class="t" style="left:135.0px;top:582px;color:#f4f4f4;font-size:16px;text-rendering:geometricPrecision;transform:scaleX(0.862);">DISTRIBUIÇÃO AUXILIAR</div>
<svg style="left:41.3px;top:605.5px;" width="18" height="15" viewBox="0 0 18 15"><path d="M0.5 0.5 h16.5 v13.6 h-16.5 z" fill="url(#shg)" stroke="#4f7fbe" stroke-width="1.2"/><rect x="0.5" y="10.1" width="16.5" height="4" fill="#4f7fbe"/><path d="M2.5 12.1 h13.5" stroke="#e8f0fa" stroke-width="1.5" stroke-dasharray="3.5 1.6"/></svg>
<div class="t" style="left:65.8px;top:605px;color:#f4f4f4;font-size:16px;text-rendering:geometricPrecision;transform:scaleX(0.899);">29</div>
<div class="t" style="left:135.0px;top:605px;color:#f4f4f4;font-size:16px;text-rendering:geometricPrecision;transform:scaleX(0.854);">MOTORES DE VENTILAÇÃO</div>
<svg style="left:41.3px;top:628.5px;" width="18" height="15" viewBox="0 0 18 15"><path d="M0.5 0.5 h16.5 v13.6 h-16.5 z" fill="url(#shg)" stroke="#4f7fbe" stroke-width="1.2"/><rect x="0.5" y="10.1" width="16.5" height="4" fill="#4f7fbe"/><path d="M2.5 12.1 h13.5" stroke="#e8f0fa" stroke-width="1.5" stroke-dasharray="3.5 1.6"/></svg>
<div class="t" style="left:65.8px;top:628px;color:#f4f4f4;font-size:16px;text-rendering:geometricPrecision;transform:scaleX(0.899);">30</div>
<div class="t" style="left:135.0px;top:628px;color:#f4f4f4;font-size:16px;text-rendering:geometricPrecision;transform:scaleX(0.867);">CIRCUITOS DE MOVIMENTAÇÃO</div>
<svg style="left:41.3px;top:651.5px;" width="18" height="15" viewBox="0 0 18 15"><path d="M0.5 0.5 h16.5 v13.6 h-16.5 z" fill="url(#shg)" stroke="#4f7fbe" stroke-width="1.2"/><rect x="0.5" y="10.1" width="16.5" height="4" fill="#4f7fbe"/><path d="M2.5 12.1 h13.5" stroke="#e8f0fa" stroke-width="1.5" stroke-dasharray="3.5 1.6"/></svg>
<div class="t" style="left:65.8px;top:651px;color:#f4f4f4;font-size:16px;text-rendering:geometricPrecision;transform:scaleX(0.899);">31</div>
<div class="t" style="left:135.0px;top:651px;color:#f4f4f4;font-size:16px;text-rendering:geometricPrecision;transform:scaleX(0.864);">UNIDADE DE AJUSTE DE GUIA</div>
<svg style="left:41.3px;top:674.5px;" width="18" height="15" viewBox="0 0 18 15"><path d="M0.5 0.5 h16.5 v13.6 h-16.5 z" fill="url(#shg)" stroke="#4f7fbe" stroke-width="1.2"/><rect x="0.5" y="10.1" width="16.5" height="4" fill="#4f7fbe"/><path d="M2.5 12.1 h13.5" stroke="#e8f0fa" stroke-width="1.5" stroke-dasharray="3.5 1.6"/></svg>
<div class="t" style="left:65.8px;top:674px;color:#f4f4f4;font-size:16px;text-rendering:geometricPrecision;transform:scaleX(0.899);">32</div>
<div class="t" style="left:135.0px;top:674px;color:#f4f4f4;font-size:16px;text-rendering:geometricPrecision;transform:scaleX(0.850);">MÓDULO PROFIBUS</div>
<svg style="left:41.3px;top:697.5px;" width="18" height="15" viewBox="0 0 18 15"><path d="M0.5 0.5 h16.5 v13.6 h-16.5 z" fill="url(#shg)" stroke="#4f7fbe" stroke-width="1.2"/><rect x="0.5" y="10.1" width="16.5" height="4" fill="#4f7fbe"/><path d="M2.5 12.1 h13.5" stroke="#e8f0fa" stroke-width="1.5" stroke-dasharray="3.5 1.6"/></svg>
<div class="t" style="left:65.8px;top:697px;color:#f4f4f4;font-size:16px;text-rendering:geometricPrecision;transform:scaleX(0.899);">33</div>
<div class="t" style="left:135.0px;top:697px;color:#f4f4f4;font-size:16px;text-rendering:geometricPrecision;transform:scaleX(0.879);">CIRCUITOS auxiliares-24Vdc</div>
<svg style="left:41.3px;top:720.5px;" width="18" height="15" viewBox="0 0 18 15"><path d="M0.5 0.5 h16.5 v13.6 h-16.5 z" fill="url(#shg)" stroke="#4f7fbe" stroke-width="1.2"/><rect x="0.5" y="10.1" width="16.5" height="4" fill="#4f7fbe"/><path d="M2.5 12.1 h13.5" stroke="#e8f0fa" stroke-width="1.5" stroke-dasharray="3.5 1.6"/></svg>
<div class="t" style="left:65.8px;top:720px;color:#f4f4f4;font-size:16px;text-rendering:geometricPrecision;transform:scaleX(0.899);">34</div>
<div class="t" style="left:135.0px;top:720px;color:#f4f4f4;font-size:16px;text-rendering:geometricPrecision;transform:scaleX(0.880);">CIRCUITOS auxiliares-220Vac</div>
<svg style="left:41.3px;top:743.5px;" width="18" height="15" viewBox="0 0 18 15"><path d="M0.5 0.5 h16.5 v13.6 h-16.5 z" fill="url(#shg)" stroke="#4f7fbe" stroke-width="1.2"/><rect x="0.5" y="10.1" width="16.5" height="4" fill="#4f7fbe"/><path d="M2.5 12.1 h13.5" stroke="#e8f0fa" stroke-width="1.5" stroke-dasharray="3.5 1.6"/></svg>
<div class="t" style="left:65.8px;top:743px;color:#f4f4f4;font-size:16px;text-rendering:geometricPrecision;transform:scaleX(0.899);">35</div>
<div class="t" style="left:135.0px;top:743px;color:#f4f4f4;font-size:16px;text-rendering:geometricPrecision;transform:scaleX(0.880);">CIRCUITOS auxiliares-220Vac</div>
<svg style="left:41.3px;top:766.5px;" width="18" height="15" viewBox="0 0 18 15"><path d="M0.5 0.5 h16.5 v13.6 h-16.5 z" fill="url(#shg)" stroke="#4f7fbe" stroke-width="1.2"/><rect x="0.5" y="10.1" width="16.5" height="4" fill="#4f7fbe"/><path d="M2.5 12.1 h13.5" stroke="#e8f0fa" stroke-width="1.5" stroke-dasharray="3.5 1.6"/></svg>
<div class="t" style="left:65.8px;top:766px;color:#f4f4f4;font-size:16px;text-rendering:geometricPrecision;transform:scaleX(0.899);">36</div>
<div class="t" style="left:135.0px;top:766px;color:#f4f4f4;font-size:16px;text-rendering:geometricPrecision;transform:scaleX(0.877);">CARRO MOTOR-24Vdc</div>
<svg style="left:41.3px;top:789.5px;" width="18" height="15" viewBox="0 0 18 15"><path d="M0.5 0.5 h16.5 v13.6 h-16.5 z" fill="url(#shg)" stroke="#4f7fbe" stroke-width="1.2"/><rect x="0.5" y="10.1" width="16.5" height="4" fill="#4f7fbe"/><path d="M2.5 12.1 h13.5" stroke="#e8f0fa" stroke-width="1.5" stroke-dasharray="3.5 1.6"/></svg>
<div class="t" style="left:65.8px;top:789px;color:#f4f4f4;font-size:16px;text-rendering:geometricPrecision;transform:scaleX(0.899);">37</div>
<div class="t" style="left:135.0px;top:789px;color:#f4f4f4;font-size:16px;text-rendering:geometricPrecision;transform:scaleX(0.823);">CIRCUITOS DE INTERFACE PLC</div>
<svg style="left:41.3px;top:812.5px;" width="18" height="15" viewBox="0 0 18 15"><path d="M0.5 0.5 h16.5 v13.6 h-16.5 z" fill="url(#shg)" stroke="#4f7fbe" stroke-width="1.2"/><rect x="0.5" y="10.1" width="16.5" height="4" fill="#4f7fbe"/><path d="M2.5 12.1 h13.5" stroke="#e8f0fa" stroke-width="1.5" stroke-dasharray="3.5 1.6"/></svg>
<div class="t" style="left:65.8px;top:812px;color:#f4f4f4;font-size:16px;text-rendering:geometricPrecision;transform:scaleX(0.899);">38</div>
<div class="t" style="left:135.0px;top:812px;color:#f4f4f4;font-size:16px;text-rendering:geometricPrecision;transform:scaleX(0.862);">DISTRIBUIÇÃO AUXILIAR</div>
<svg style="left:41.3px;top:835.5px;" width="18" height="15" viewBox="0 0 18 15"><path d="M0.5 0.5 h16.5 v13.6 h-16.5 z" fill="url(#shg)" stroke="#4f7fbe" stroke-width="1.2"/><rect x="0.5" y="10.1" width="16.5" height="4" fill="#4f7fbe"/><path d="M2.5 12.1 h13.5" stroke="#e8f0fa" stroke-width="1.5" stroke-dasharray="3.5 1.6"/></svg>
<div class="t" style="left:65.8px;top:835px;color:#f4f4f4;font-size:16px;text-rendering:geometricPrecision;transform:scaleX(0.899);">39</div>
<div class="t" style="left:135.0px;top:835px;color:#f4f4f4;font-size:16px;text-rendering:geometricPrecision;transform:scaleX(0.854);">MOTORES DE VENTILAÇÃO</div>
<svg style="left:41.3px;top:858.5px;" width="18" height="15" viewBox="0 0 18 15"><path d="M0.5 0.5 h16.5 v13.6 h-16.5 z" fill="url(#shg)" stroke="#4f7fbe" stroke-width="1.2"/><rect x="0.5" y="10.1" width="16.5" height="4" fill="#4f7fbe"/><path d="M2.5 12.1 h13.5" stroke="#e8f0fa" stroke-width="1.5" stroke-dasharray="3.5 1.6"/></svg>
<div class="t" style="left:65.8px;top:858px;color:#f4f4f4;font-size:16px;text-rendering:geometricPrecision;transform:scaleX(0.899);">40</div>
<div class="t" style="left:135.0px;top:858px;color:#f4f4f4;font-size:16px;text-rendering:geometricPrecision;transform:scaleX(0.867);">CIRCUITOS DE MOVIMENTAÇÃO</div>
<svg style="left:41.3px;top:881.5px;" width="18" height="15" viewBox="0 0 18 15"><path d="M0.5 0.5 h16.5 v13.6 h-16.5 z" fill="url(#shg)" stroke="#4f7fbe" stroke-width="1.2"/><rect x="0.5" y="10.1" width="16.5" height="4" fill="#4f7fbe"/><path d="M2.5 12.1 h13.5" stroke="#e8f0fa" stroke-width="1.5" stroke-dasharray="3.5 1.6"/></svg>
<div class="t" style="left:65.8px;top:881px;color:#f4f4f4;font-size:16px;text-rendering:geometricPrecision;transform:scaleX(0.899);">41</div>
<div class="t" style="left:135.0px;top:881px;color:#f4f4f4;font-size:16px;text-rendering:geometricPrecision;transform:scaleX(0.864);">UNIDADE DE AJUSTE DE GUIA</div>
<svg style="left:41.3px;top:904.5px;" width="18" height="15" viewBox="0 0 18 15"><path d="M0.5 0.5 h16.5 v13.6 h-16.5 z" fill="url(#shg)" stroke="#4f7fbe" stroke-width="1.2"/><rect x="0.5" y="10.1" width="16.5" height="4" fill="#4f7fbe"/><path d="M2.5 12.1 h13.5" stroke="#e8f0fa" stroke-width="1.5" stroke-dasharray="3.5 1.6"/></svg>
<div class="t" style="left:65.8px;top:904px;color:#f4f4f4;font-size:16px;text-rendering:geometricPrecision;transform:scaleX(0.899);">42</div>
<div class="t" style="left:135.0px;top:904px;color:#f4f4f4;font-size:16px;text-rendering:geometricPrecision;transform:scaleX(0.850);">MÓDULO PROFIBUS</div>
<svg style="left:41.3px;top:927.5px;" width="18" height="15" viewBox="0 0 18 15"><path d="M0.5 0.5 h16.5 v13.6 h-16.5 z" fill="url(#shg)" stroke="#4f7fbe" stroke-width="1.2"/><rect x="0.5" y="10.1" width="16.5" height="4" fill="#4f7fbe"/><path d="M2.5 12.1 h13.5" stroke="#e8f0fa" stroke-width="1.5" stroke-dasharray="3.5 1.6"/></svg>
<div class="t" style="left:65.8px;top:927px;color:#f4f4f4;font-size:16px;text-rendering:geometricPrecision;transform:scaleX(0.899);">43</div>
<div class="t" style="left:135.0px;top:927px;color:#f4f4f4;font-size:16px;text-rendering:geometricPrecision;transform:scaleX(0.879);">CIRCUITOS auxiliares-24Vdc</div>
<svg style="left:41.3px;top:950.5px;" width="18" height="15" viewBox="0 0 18 15"><path d="M0.5 0.5 h16.5 v13.6 h-16.5 z" fill="url(#shg)" stroke="#4f7fbe" stroke-width="1.2"/><rect x="0.5" y="10.1" width="16.5" height="4" fill="#4f7fbe"/><path d="M2.5 12.1 h13.5" stroke="#e8f0fa" stroke-width="1.5" stroke-dasharray="3.5 1.6"/></svg>
<div class="t" style="left:65.8px;top:950px;color:#f4f4f4;font-size:16px;text-rendering:geometricPrecision;transform:scaleX(0.899);">44</div>
<div class="t" style="left:135.0px;top:950px;color:#f4f4f4;font-size:16px;text-rendering:geometricPrecision;transform:scaleX(0.880);">CIRCUITOS auxiliares-220Vac</div>
<svg style="left:41.3px;top:974px;" width="18" height="2" viewBox="0 0 18 2"><rect x="0" y="0" width="17.5" height="1.5" fill="#4f7fbe"/></svg>
<div style="left:374.3px;top:346px;width:20.6px;height:629px;background:#f0f0f0;"></div>
<div style="left:375.6px;top:465.5px;width:18.3px;height:133px;background:#cdcdcd;"></div>
<svg style="left:379.5px;top:352.5px;" width="10" height="7" viewBox="0 0 10 7"><path d="M0.7 6 L5 1.5 L9.3 6" fill="none" stroke="#555" stroke-width="1.6"/></svg>
<div style="left:374.3px;top:952px;width:20.6px;height:23px;background:#ffffff;border:1px solid #dcdcdc;box-sizing:border-box;"></div>
<svg style="left:379.5px;top:960.5px;" width="10" height="7" viewBox="0 0 10 7"><path d="M0.7 1 L5 5.5 L9.3 1" fill="none" stroke="#555" stroke-width="1.6"/></svg>
<svg style="left:0;top:0" width="1918" height="1030" viewBox="0 0 1918 1030"><defs><clipPath id="cv"><rect x="406" y="252" width="752" height="734"/></clipPath><filter id="glow" x="-30%" y="-30%" width="160%" height="160%"><feGaussianBlur stdDeviation="1.3"/></filter></defs><rect x="406" y="252" width="752" height="734" fill="#212830"/><g clip-path="url(#cv)"><path d="M398.0 252 V986" stroke="#272f39" stroke-width="1"/><path d="M425.6 252 V986" stroke="#272f39" stroke-width="1"/><path d="M453.2 252 V986" stroke="#272f39" stroke-width="1"/><path d="M480.8 252 V986" stroke="#272f39" stroke-width="1"/><path d="M508.4 252 V986" stroke="#2f3743" stroke-width="1"/><path d="M536.0 252 V986" stroke="#272f39" stroke-width="1"/><path d="M563.6 252 V986" stroke="#272f39" stroke-width="1"/><path d="M591.2 252 V986" stroke="#272f39" stroke-width="1"/><path d="M618.8 252 V986" stroke="#272f39" stroke-width="1"/><path d="M646.5 252 V986" stroke="#2f3743" stroke-width="1"/><path d="M674.1 252 V986" stroke="#272f39" stroke-width="1"/><path d="M701.7 252 V986" stroke="#272f39" stroke-width="1"/><path d="M729.3 252 V986" stroke="#272f39" stroke-width="1"/><path d="M756.9 252 V986" stroke="#272f39" stroke-width="1"/><path d="M784.5 252 V986" stroke="#2f3743" stroke-width="1"/><path d="M812.1 252 V986" stroke="#272f39" stroke-width="1"/><path d="M839.7 252 V986" stroke="#272f39" stroke-width="1"/><path d="M867.3 252 V986" stroke="#272f39" stroke-width="1"/><path d="M894.9 252 V986" stroke="#272f39" stroke-width="1"/><path d="M922.5 252 V986" stroke="#2f3743" stroke-width="1"/><path d="M950.2 252 V986" stroke="#272f39" stroke-width="1"/><path d="M977.8 252 V986" stroke="#272f39" stroke-width="1"/><path d="M1005.4 252 V986" stroke="#272f39" stroke-width="1"/><path d="M1033.0 252 V986" stroke="#272f39" stroke-width="1"/><path d="M1060.6 252 V986" stroke="#2f3743" stroke-width="1"/><path d="M1088.2 252 V986" stroke="#272f39" stroke-width="1"/><path d="M1115.8 252 V986" stroke="#272f39" stroke-width="1"/><path d="M1143.4 252 V986" stroke="#272f39" stroke-width="1"/><path d="M406 232.2 H1158" stroke="#272f39" stroke-width="1"/><path d="M406 259.9 H1158" stroke="#272f39" stroke-width="1"/><path d="M406 287.5 H1158" stroke="#272f39" stroke-width="1"/><path d="M406 315.2 H1158" stroke="#2f3743" stroke-width="1"/><path d="M406 342.9 H1158" stroke="#272f39" stroke-width="1"/><path d="M406 370.5 H1158" stroke="#272f39" stroke-width="1"/><path d="M406 398.2 H1158" stroke="#272f39" stroke-width="1"/><path d="M406 425.8 H1158" stroke="#272f39" stroke-width="1"/><path d="M406 453.5 H1158" stroke="#2f3743" stroke-width="1"/><path d="M406 481.2 H1158" stroke="#272f39" stroke-width="1"/><path d="M406 508.8 H1158" stroke="#272f39" stroke-width="1"/><path d="M406 536.5 H1158" stroke="#272f39" stroke-width="1"/><path d="M406 564.1 H1158" stroke="#272f39" stroke-width="1"/><path d="M406 591.8 H1158" stroke="#2f3743" stroke-width="1"/><path d="M406 619.5 H1158" stroke="#272f39" stroke-width="1"/><path d="M406 647.1 H1158" stroke="#272f39" stroke-width="1"/><path d="M406 674.8 H1158" stroke="#272f39" stroke-width="1"/><path d="M406 702.4 H1158" stroke="#272f39" stroke-width="1"/><path d="M406 730.1 H1158" stroke="#2f3743" stroke-width="1"/><path d="M406 757.8 H1158" stroke="#272f39" stroke-width="1"/><path d="M406 785.4 H1158" stroke="#272f39" stroke-width="1"/><path d="M406 813.1 H1158" stroke="#272f39" stroke-width="1"/><path d="M406 840.7 H1158" stroke="#272f39" stroke-width="1"/><path d="M406 868.4 H1158" stroke="#2f3743" stroke-width="1"/><path d="M406 896.1 H1158" stroke="#272f39" stroke-width="1"/><path d="M406 923.7 H1158" stroke="#272f39" stroke-width="1"/><path d="M406 951.4 H1158" stroke="#272f39" stroke-width="1"/><path d="M406 979.0 H1158" stroke="#272f39" stroke-width="1"/><path d="M661.3 274.4 L908.5 274.4" fill="none" stroke="#0a0ae0" stroke-width="1.35" /><path d="M661.3 302.2 L908.5 302.2" fill="none" stroke="#0a0ae0" stroke-width="1.35" /><path d="M757.0 252.0 L757.0 314.0" fill="none" stroke="#0a0ae0" stroke-width="1.35" /><path d="M777.0 274.4 L784.6 282.0 L784.6 314.0" fill="none" stroke="#0a0ae0" stroke-width="1.35" /><path d="M804.8 302.2 L812.2 309.6 L812.2 314.0" fill="none" stroke="#0a0ae0" stroke-width="1.35" /><path d="M649.0 274.4 h12 M655.0 271.0 l6 3.4 l-6 3.4" fill="none" stroke="#14dc14" stroke-width="1.2" /><path d="M649.0 302.2 h12 M655.0 298.8 l6 3.4 l-6 3.4" fill="none" stroke="#14dc14" stroke-width="1.2" /><path d="M908.3 274.4 h12 M914.3 271.0 l6 3.4 l-6 3.4" fill="none" stroke="#14dc14" stroke-width="1.2" /><path d="M908.3 302.2 h12 M914.3 298.8 l6 3.4 l-6 3.4" fill="none" stroke="#14dc14" stroke-width="1.2" /><text transform="translate(622.0 278.3)" fill="#eaea00" font-size="9" textLength="21.5" lengthAdjust="spacingAndGlyphs" >18/A2</text><text transform="translate(622.0 306.2)" fill="#eaea00" font-size="9" textLength="21.5" lengthAdjust="spacingAndGlyphs" >18/A2</text><text transform="translate(925.7 278.3)" fill="#eaea00" font-size="9" textLength="21.5" lengthAdjust="spacingAndGlyphs" >28/A1</text><text transform="translate(925.7 306.2)" fill="#eaea00" font-size="9" textLength="21.5" lengthAdjust="spacingAndGlyphs" >28/A1</text><text transform="translate(671.0 271.3) scale(0.82 1)" fill="#eaea00" font-size="8.5" text-anchor="start" >L21</text><text transform="translate(671.0 298.7) scale(0.82 1)" fill="#eaea00" font-size="8.5" text-anchor="start" >L31</text><text transform="translate(779.3 271.3) scale(0.82 1)" fill="#eaea00" font-size="8.5" text-anchor="start" >L21</text><text transform="translate(790.7 298.7) scale(0.82 1)" fill="#eaea00" font-size="8.5" text-anchor="start" >L31</text><text transform="translate(887.8 271.3) scale(0.82 1)" fill="#eaea00" font-size="8.5" text-anchor="start" >L21</text><text transform="translate(887.8 298.7) scale(0.82 1)" fill="#eaea00" font-size="8.5" text-anchor="start" >L31</text><path d="M757.0 314 V326 M757.0 343.2 V398 M747.2 327.7 L757.3 343.4 M757.0 361 h6.6 v6.3 h-6.6 M757.0 374.3 a4.2 3.9 0 0 1 0 7.8 M784.6 314 V326 M784.6 343.2 V398 M774.8 327.7 L784.9 343.4 M784.6 361 h6.6 v6.3 h-6.6 M784.6 374.3 a4.2 3.9 0 0 1 0 7.8 M812.2 314 V326 M812.2 343.2 V398 M802.4 327.7 L812.5 343.4 M812.2 361 h6.6 v6.3 h-6.6 M812.2 374.3 a4.2 3.9 0 0 1 0 7.8 M742.8 357.2 H826.6 V384.5 H742.8 Z M742.8 371.2 H826.6 M770.4 357.2 V384.5 M798.6 357.2 V384.5" fill="none" stroke="#1a6cff" stroke-width="3.6" filter="url(#glow)" opacity=".9"/><path d="M754.0 327 l6 6 M760.0 327 l-6 6 M781.6 327 l6 6 M787.6 327 l-6 6 M809.2 327 l6 6 M815.2 327 l-6 6" fill="none" stroke="#1a6cff" stroke-width="3.6" filter="url(#glow)" opacity=".9"/><path d="M757.0 314 V326 M757.0 343.2 V398 M747.2 327.7 L757.3 343.4 M757.0 361 h6.6 v6.3 h-6.6 M757.0 374.3 a4.2 3.9 0 0 1 0 7.8 M784.6 314 V326 M784.6 343.2 V398 M774.8 327.7 L784.9 343.4 M784.6 361 h6.6 v6.3 h-6.6 M784.6 374.3 a4.2 3.9 0 0 1 0 7.8 M812.2 314 V326 M812.2 343.2 V398 M802.4 327.7 L812.5 343.4 M812.2 361 h6.6 v6.3 h-6.6 M812.2 374.3 a4.2 3.9 0 0 1 0 7.8 M742.8 357.2 H826.6 V384.5 H742.8 Z M742.8 371.2 H826.6 M770.4 357.2 V384.5 M798.6 357.2 V384.5" fill="none" stroke="#14dc14" stroke-width="1.3" /><path d="M754.0 327 l6 6 M760.0 327 l-6 6 M781.6 327 l6 6 M787.6 327 l-6 6 M809.2 327 l6 6 M815.2 327 l-6 6" fill="none" stroke="#28c8e8" stroke-width="1.3" /><circle cx="750.0" cy="338.5" r="2.6" fill="#18b878" opacity=".8"/><circle cx="777.6" cy="338.5" r="2.6" fill="#18b878" opacity=".8"/><circle cx="805.2" cy="338.5" r="2.6" fill="#18b878" opacity=".8"/><text transform="translate(727.2 323) scale(.84 1)" fill="#1a6cff" font-size="10.5" filter="url(#glow)" stroke="#1a6cff" stroke-width="2">Q26</text><text transform="translate(727.2 323.0) scale(0.84 1)" fill="#38b8ff" font-size="10.5" text-anchor="start" >Q26</text><path d="M752.8 336.5 L807.5 336.5" fill="none" stroke="#eaea00" stroke-width="1.2" stroke-dasharray="5.5 3" /><path d="M720.3 339.3 L748.5 339.3" fill="none" stroke="#eaea00" stroke-width="1.2" stroke-dasharray="5.5 3" /><path d="M728.8 336 a2 2 0 0 1 2 -2 h7.600 a2 2 0 0 1 2 2 v7 a2 2 0 0 1 -2 2 h-7.600 a2 2 0 0 1 -2 -2z M734.6 334 v11 M728.8 339.3 h11.6" fill="none" stroke="#14dc14" stroke-width="1.4" /><path d="M720.7 336.0 L720.7 343.0" fill="none" stroke="#14dc14" stroke-width="1.3" /><path d="M734.5 345.5 L734.5 381.3 L739.8 381.3" fill="none" stroke="#eaea00" stroke-width="1.2" stroke-dasharray="5.5 3" /><path d="M734.5 366.8 L739.8 366.8" fill="none" stroke="#eaea00" stroke-width="1.2" /><rect x="808.4" y="363.1" width="6.5" height="6.5" fill="none" stroke="#f4f4f4" stroke-width="1.1"/><path d="M757.0 398.3 L757.0 481.8" fill="none" stroke="#12d6d6" stroke-width="1.3" /><path d="M784.6 398.3 L784.6 481.8" fill="none" stroke="#12d6d6" stroke-width="1.3" /><path d="M812.2 398.3 L812.2 481.8" fill="none" stroke="#12d6d6" stroke-width="1.3" /><path d="M437.8 357.4 L577.2 357.4 L577.2 440.4 L757.0 440.4" fill="none" stroke="#12d6d6" stroke-width="1.3" /><path d="M494.7 357.4 L494.7 398.8" fill="none" stroke="#12d6d6" stroke-width="1.3" /><path d="M527.8 384.8 L605.4 384.8 L605.4 467.8 L784.6 467.8" fill="none" stroke="#12d6d6" stroke-width="1.3" /><path d="M522.4 390.0 L522.4 398.8" fill="none" stroke="#12d6d6" stroke-width="1.3" /><path d="M494.7 398.8 L494.7 413.0" fill="none" stroke="#14dc14" stroke-width="1.3" /><path d="M491.2 412.8 L498.7 412.8" fill="none" stroke="#14dc14" stroke-width="1.3" /><path d="M484.5 410.4 L494.7 426.7 L494.7 440.4" fill="none" stroke="#14dc14" stroke-width="1.3" /><path d="M522.4 398.8 L522.4 413.0" fill="none" stroke="#14dc14" stroke-width="1.3" /><path d="M518.9 412.8 L526.4 412.8" fill="none" stroke="#14dc14" stroke-width="1.3" /><path d="M512.2 410.4 L522.4 426.7 L522.4 440.4" fill="none" stroke="#14dc14" stroke-width="1.3" /><path d="M480.2 419.3 L519.5 419.3" fill="none" stroke="#eaea00" stroke-width="1.2" stroke-dasharray="5.5 3" /><path d="M480.2 416.6 L480.2 422.6" fill="none" stroke="#14dc14" stroke-width="1.3" /><text transform="translate(459.8 416.8) scale(0.84 1)" fill="#12d6d6" font-size="10.3" text-anchor="start" >Q25</text><text transform="translate(660.8 437.2) scale(0.82 1)" fill="#eaea00" font-size="9" text-anchor="start" >23.1</text><text transform="translate(687.8 464.3) scale(0.82 1)" fill="#eaea00" font-size="9" text-anchor="start" >23.5</text><text transform="translate(808.3 449.5) rotate(-90) scale(0.82 1)" fill="#eaea00" font-size="9" text-anchor="start" >23.11</text><path d="M494.7 440.4 L494.7 471.0" fill="none" stroke="#12d6d6" stroke-width="1.3" /><path d="M494.7 474.0 a4.2 3.6 0 0 1 0 7.1 a4.2 3.6 0 0 1 0 7.1 a4.2 3.6 0 0 1 0 7.1 a4.2 3.6 0 0 1 0 7.1" fill="none" stroke="#14dc14" stroke-width="1.3" /><path d="M494.7 467.3 L494.7 474.0" fill="none" stroke="#14dc14" stroke-width="1.3" /><path d="M494.7 502.5 L494.7 509.5" fill="none" stroke="#14dc14" stroke-width="1.3" /><path d="M501.6 474.0 L501.6 502.8" fill="none" stroke="#14dc14" stroke-width="1.3" /><path d="M494.7 509.5 L494.7 564.4" fill="none" stroke="#12d6d6" stroke-width="1.3" /><path d="M522.4 440.4 L522.4 564.4" fill="none" stroke="#12d6d6" stroke-width="1.3" /><text transform="translate(462.6 486.2) scale(0.78 1)" fill="#12d6d6" font-size="10.5" text-anchor="start" >20T1</text><text transform="translate(491.5 461.3) rotate(-90) scale(0.82 1)" fill="#eaea00" font-size="9" text-anchor="start" >23.2</text><text transform="translate(518.3 509.5) rotate(-90) scale(0.82 1)" fill="#eaea00" font-size="9" text-anchor="start" >23.6</text><text transform="translate(491.5 544.2) rotate(-90) scale(0.82 1)" fill="#eaea00" font-size="9" text-anchor="start" >23.3</text><text transform="translate(724.0 500.2) scale(0.8 1)" fill="#12d6d6" font-size="10.5" text-anchor="start" >20R1</text><path d="M757.0 481.8 L757.0 488.0" fill="none" stroke="#14dc14" stroke-width="1.3" /><path d="M757.0 488.0 a4.2 3.5 0 0 1 0 7.0 a4.2 3.5 0 0 1 0 7.0 a4.2 3.5 0 0 1 0 7.0 a4.2 3.5 0 0 1 0 7.0" fill="none" stroke="#14dc14" stroke-width="1.3" /><path d="M757.0 516.0 L757.0 522.6" fill="none" stroke="#14dc14" stroke-width="1.3" /><path d="M763.4 487.0 L763.4 499.0" fill="none" stroke="#14dc14" stroke-width="1.3" /><path d="M763.4 504.0 L763.4 516.0" fill="none" stroke="#14dc14" stroke-width="1.3" /><path d="M757.0 522.6 L757.0 564.4" fill="none" stroke="#12d6d6" stroke-width="1.3" /><path d="M784.6 481.8 L784.6 488.0" fill="none" stroke="#14dc14" stroke-width="1.3" /><path d="M784.6 488.0 a4.2 3.5 0 0 1 0 7.0 a4.2 3.5 0 0 1 0 7.0 a4.2 3.5 0 0 1 0 7.0 a4.2 3.5 0 0 1 0 7.0" fill="none" stroke="#14dc14" stroke-width="1.3" /><path d="M784.6 516.0 L784.6 522.6" fill="none" stroke="#14dc14" stroke-width="1.3" /><path d="M791.0 487.0 L791.0 499.0" fill="none" stroke="#14dc14" stroke-width="1.3" /><path d="M791.0 504.0 L791.0 516.0" fill="none" stroke="#14dc14" stroke-width="1.3" /><path d="M784.6 522.6 L784.6 564.4" fill="none" stroke="#12d6d6" stroke-width="1.3" /><path d="M812.2 481.8 L812.2 488.0" fill="none" stroke="#14dc14" stroke-width="1.3" /><path d="M812.2 488.0 a4.2 3.5 0 0 1 0 7.0 a4.2 3.5 0 0 1 0 7.0 a4.2 3.5 0 0 1 0 7.0 a4.2 3.5 0 0 1 0 7.0" fill="none" stroke="#14dc14" stroke-width="1.3" /><path d="M812.2 516.0 L812.2 522.6" fill="none" stroke="#14dc14" stroke-width="1.3" /><path d="M818.6 487.0 L818.6 499.0" fill="none" stroke="#14dc14" stroke-width="1.3" /><path d="M818.6 504.0 L818.6 516.0" fill="none" stroke="#14dc14" stroke-width="1.3" /><path d="M812.2 522.6 L812.2 564.4" fill="none" stroke="#12d6d6" stroke-width="1.3" /><text transform="translate(753.1 550.5) rotate(-90) scale(0.82 1)" fill="#eaea00" font-size="9" text-anchor="start" >23.8</text><text transform="translate(780.8 552.5) rotate(-90) scale(0.82 1)" fill="#eaea00" font-size="9" text-anchor="start" >23.10</text><text transform="translate(808.3 552.5) rotate(-90) scale(0.82 1)" fill="#eaea00" font-size="9" text-anchor="start" >23.12</text><path d="M549.6 564.4 L549.6 522.6 L577.6 522.6" fill="none" stroke="#12d6d6" stroke-width="1.3" /><path d="M577.6 522.6 L577.6 534.1" fill="none" stroke="#14dc14" stroke-width="1.3" /><path d="M569.9 534.1 L585.3 534.1" fill="none" stroke="#14dc14" stroke-width="1.3" /><path d="M572.5 538.3 L582.7 538.3" fill="none" stroke="#14dc14" stroke-width="1.3" /><path d="M574.3 542.3 L580.9 542.3" fill="none" stroke="#14dc14" stroke-width="1.3" /><path d="M867.4 564.4 L867.4 522.6 L895.0 522.6" fill="none" stroke="#12d6d6" stroke-width="1.3" /><path d="M895.0 522.6 L895.0 534.1" fill="none" stroke="#14dc14" stroke-width="1.3" /><path d="M887.3 534.1 L902.7 534.1" fill="none" stroke="#14dc14" stroke-width="1.3" /><path d="M889.9 538.3 L900.1 538.3" fill="none" stroke="#14dc14" stroke-width="1.3" /><path d="M891.7 542.3 L898.3 542.3" fill="none" stroke="#14dc14" stroke-width="1.3" /><path d="M1143.3 564.4 L1143.3 522.6 L1160.0 522.6" fill="none" stroke="#12d6d6" stroke-width="1.3" /><text transform="translate(546.3 548.0) rotate(-90) scale(0.82 1)" fill="#eaea00" font-size="8.5" text-anchor="start" >PE</text><text transform="translate(864.0 548.0) rotate(-90) scale(0.82 1)" fill="#eaea00" font-size="8.5" text-anchor="start" >PE</text><text transform="translate(1140.0 548.0) rotate(-90) scale(0.82 1)" fill="#eaea00" font-size="8.5" text-anchor="start" >PE</text><path d="M1034.8 399.4 h12 M1040.8 396.0 l6 3.4 l-6 3.4" fill="none" stroke="#14dc14" stroke-width="1.2" /><path d="M1034.8 426.4 h12 M1040.8 423.0 l6 3.4 l-6 3.4" fill="none" stroke="#14dc14" stroke-width="1.2" /><text transform="translate(1009.3 403.3)" fill="#eaea00" font-size="9" textLength="20" lengthAdjust="spacingAndGlyphs" >18/E6</text><text transform="translate(1009.3 430.3)" fill="#eaea00" font-size="9" textLength="20" lengthAdjust="spacingAndGlyphs" >18/E6</text><path d="M1046.5 399.4 L1088.2 399.4 L1088.2 481.8" fill="none" stroke="#12d6d6" stroke-width="1.3" /><path d="M1046.5 426.4 L1115.7 426.4 L1115.7 481.8" fill="none" stroke="#12d6d6" stroke-width="1.3" /><text transform="translate(1057.6 395.8)" fill="#eaea00" font-size="9" textLength="16.2" lengthAdjust="spacingAndGlyphs" >18.11</text><text transform="translate(1095.2 423.0)" fill="#eaea00" font-size="9" textLength="16.5" lengthAdjust="spacingAndGlyphs" >18.13</text><text transform="translate(1086.0 448.0) rotate(-90) scale(0.82 1)" fill="#eaea00" font-size="9" text-anchor="start" >18.11</text><text transform="translate(1052.4 500.2)" fill="#12d6d6" font-size="10.5" textLength="20.6" lengthAdjust="spacingAndGlyphs" >25K2</text><path d="M1088.2 481.8 V492.5 a1.6 2 0 0 1 -3 1.5" fill="none" stroke="#14dc14" stroke-width="1.3" /><path d="M1079.2 492.8 L1088.2 512.0 L1088.2 522.6" fill="none" stroke="#14dc14" stroke-width="1.3" /><path d="M1088.2 522.6 L1088.2 564.4" fill="none" stroke="#12d6d6" stroke-width="1.3" /><path d="M1115.7 481.8 V492.5 a1.6 2 0 0 1 -3 1.5" fill="none" stroke="#14dc14" stroke-width="1.3" /><path d="M1106.7 492.8 L1115.7 512.0 L1115.7 522.6" fill="none" stroke="#14dc14" stroke-width="1.3" /><path d="M1115.7 522.6 L1115.7 564.4" fill="none" stroke="#12d6d6" stroke-width="1.3" /><path d="M1084.5 502.4 L1112.6 502.4" fill="none" stroke="#eaea00" stroke-width="1.2" stroke-dasharray="5.5 3" /><text transform="translate(1084.6 490.3) rotate(-90) scale(0.82 1)" fill="#eaea00" font-size="9.5" text-anchor="start" >1</text><text transform="translate(1112.2 490.3) rotate(-90) scale(0.82 1)" fill="#eaea00" font-size="9.5" text-anchor="start" >3</text><text transform="translate(1084.6 520.5) rotate(-90) scale(0.82 1)" fill="#eaea00" font-size="9.5" text-anchor="start" >2</text><text transform="translate(1112.2 520.5) rotate(-90) scale(0.82 1)" fill="#eaea00" font-size="9.5" text-anchor="start" >4</text><text transform="translate(1084.5 553.0) rotate(-90) scale(0.82 1)" fill="#eaea00" font-size="9" text-anchor="start" >23.14</text><text transform="translate(1112.1 553.0) rotate(-90) scale(0.82 1)" fill="#eaea00" font-size="9" text-anchor="start" >23.15</text><path d="M425.3 564.4 L1160.0 564.4" fill="none" stroke="#14dc14" stroke-width="2.2" /><path d="M425.3 715.6 L1160.0 715.6" fill="none" stroke="#14dc14" stroke-width="2.2" /><path d="M425.3 563.3 L425.3 716.7" fill="none" stroke="#14dc14" stroke-width="2.2" /><path d="M591.4 564.4 L591.4 715.6" fill="none" stroke="#14dc14" stroke-width="2.2" /><rect x="487.5" y="564.4" width="14.4" height="19.4" fill="none" stroke="#14dc14" stroke-width="1.2"/><text transform="translate(497.5 565.7) rotate(-90) scale(0.74 1)" fill="#eaea00" font-size="7.5" text-anchor="end" font-weight="bold">X1:1</text><rect x="515.2" y="564.4" width="14.4" height="19.4" fill="none" stroke="#14dc14" stroke-width="1.2"/><text transform="translate(525.2 565.7) rotate(-90) scale(0.74 1)" fill="#eaea00" font-size="7.5" text-anchor="end" font-weight="bold">X1:7</text><rect x="749.8" y="564.4" width="14.4" height="19.4" fill="none" stroke="#14dc14" stroke-width="1.2"/><text transform="translate(759.8 565.7) rotate(-90) scale(0.74 1)" fill="#eaea00" font-size="7.5" text-anchor="end" font-weight="bold">U1</text><rect x="777.4" y="564.4" width="14.4" height="19.4" fill="none" stroke="#14dc14" stroke-width="1.2"/><text transform="translate(787.4 565.7) rotate(-90) scale(0.74 1)" fill="#eaea00" font-size="7.5" text-anchor="end" font-weight="bold">V1</text><rect x="805.0" y="564.4" width="14.4" height="19.4" fill="none" stroke="#14dc14" stroke-width="1.2"/><text transform="translate(815.0 565.7) rotate(-90) scale(0.74 1)" fill="#eaea00" font-size="7.5" text-anchor="end" font-weight="bold">W1</text><rect x="860.2" y="564.4" width="14.4" height="19.4" fill="none" stroke="#14dc14" stroke-width="1.2"/><text transform="translate(870.2 565.7) rotate(-90) scale(0.74 1)" fill="#eaea00" font-size="7.5" text-anchor="end" font-weight="bold">EGP</text><rect x="1081.0" y="564.4" width="14.4" height="19.4" fill="none" stroke="#14dc14" stroke-width="1.2"/><text transform="translate(1091.0 565.7) rotate(-90) scale(0.74 1)" fill="#eaea00" font-size="7.5" text-anchor="end" font-weight="bold">X2:1</text><rect x="1108.5" y="564.4" width="14.4" height="19.4" fill="none" stroke="#14dc14" stroke-width="1.2"/><text transform="translate(1118.5 565.7) rotate(-90) scale(0.74 1)" fill="#eaea00" font-size="7.5" text-anchor="end" font-weight="bold">X2:2</text><rect x="1136.1" y="564.4" width="14.4" height="19.4" fill="none" stroke="#14dc14" stroke-width="1.2"/><text transform="translate(1146.1 565.7) rotate(-90) scale(0.74 1)" fill="#eaea00" font-size="7.5" text-anchor="end" font-weight="bold">X2:3</text><rect x="487.5" y="696.6" width="14.4" height="19.4" fill="none" stroke="#14dc14" stroke-width="1.2"/><text transform="translate(497.5 701.6) rotate(-90) scale(0.74 1)" fill="#eaea00" font-size="7.5" text-anchor="end" font-weight="bold">X1:5</text><rect x="515.2" y="696.6" width="14.4" height="19.4" fill="none" stroke="#14dc14" stroke-width="1.2"/><text transform="translate(525.2 701.6) rotate(-90) scale(0.74 1)" fill="#eaea00" font-size="7.5" text-anchor="end" font-weight="bold">X1:3</text><rect x="749.8" y="696.6" width="14.4" height="19.4" fill="none" stroke="#14dc14" stroke-width="1.2"/><rect x="805.0" y="696.6" width="14.4" height="19.4" fill="none" stroke="#14dc14" stroke-width="1.2"/><text transform="translate(815.0 701.6) rotate(-90) scale(0.74 1)" fill="#eaea00" font-size="7.5" text-anchor="end" font-weight="bold">D1</text><text transform="translate(402.8 571.5) scale(0.8 1)" fill="#12d6d6" font-size="9.5" text-anchor="start" >A1</text><text transform="translate(402.8 581.8) scale(0.8 1)" fill="#12d6d6" font-size="9.5" text-anchor="start" >A1</text><path d="M508.4 605.4 V633.4 M493.9 619.4 H513.0 M503.8 615.4 h9.200 l-4.600 9z M503.8 624.4 h9.200" fill="none" stroke="#14dc14" stroke-width="1.2" /><text transform="translate(492.4 653.2)" fill="#14dc14" font-size="12" textLength="32.2" lengthAdjust="spacingAndGlyphs" >FIELD</text><rect x="467" y="661.1" width="83.6" height="13.7" fill="none" stroke="#14dc14" stroke-width="1.2"/><text transform="translate(483.0 672.2)" fill="#12d6d6" font-size="11" textLength="55" lengthAdjust="spacingAndGlyphs" >SDCS FEX2</text><path d="M770.6 633.4 V661.4 M756.1 647.4 H775.2 M766.0 643.4 h9.200 l-4.600 9z M766.0 652.4 h9.200" fill="none" stroke="#14dc14" stroke-width="1.2" /><rect x="782.4" y="640.5" width="4.200" height="14" fill="none" stroke="#12d6d6" stroke-width="1.2"/><path d="M784.5 633.0 L784.5 662.0" fill="none" stroke="#12d6d6" stroke-width="1.2" /><path d="M799 633.4 V661.4 M799 647.4 H812 M794.4 651.400 h9.200 l-4.600 -9z M794.4 642.400 h9.200" fill="none" stroke="#14dc14" stroke-width="1.2" /><text transform="translate(917.5 653.2)" fill="#12d6d6" font-size="12" textLength="65.6" lengthAdjust="spacingAndGlyphs" >ARMATURE</text><rect x="839.1" y="661.1" width="221.5" height="13.7" fill="none" stroke="#14dc14" stroke-width="1.2"/><text transform="translate(1095.5 648.2)" fill="#14dc14" font-size="9.5" textLength="16.6" lengthAdjust="spacingAndGlyphs" >FAN</text><circle cx="1129.7" cy="646.5" r="14" fill="none" stroke="#14dc14" stroke-width="1.3"/><path d="M1119.4 637.2 L1143.5 644.8" fill="none" stroke="#14dc14" stroke-width="1.3" /><path d="M1120.5 657.6 L1143.0 651.5" fill="none" stroke="#14dc14" stroke-width="1.3" /><text transform="translate(1115.0 675.2)" fill="#12d6d6" font-size="8.5" textLength="29.2" lengthAdjust="spacingAndGlyphs" >0.653kW</text><path d="M494.7 715.6 L494.7 798.6 L687.0 798.6" fill="none" stroke="#12d6d6" stroke-width="1.3" /><path d="M687.0 798.6 L729.3 798.6 L729.3 810.0" fill="none" stroke="#14dc14" stroke-width="1.3" /><path d="M522.4 715.6 L522.4 810.0" fill="none" stroke="#12d6d6" stroke-width="1.3" /><path d="M757.0 715.6 L757.0 810.0" fill="none" stroke="#12d6d6" stroke-width="1.3" /><path d="M812.2 715.6 L812.2 810.0" fill="none" stroke="#12d6d6" stroke-width="1.3" /><text transform="translate(582.7 794.8)" fill="#eaea00" font-size="9" textLength="14.6" lengthAdjust="spacingAndGlyphs" >23.4</text><text transform="translate(659.9 795.2)" fill="#12d6d6" font-size="10" textLength="20.6" lengthAdjust="spacingAndGlyphs" >X13A</text><text transform="translate(695.7 796.6)" fill="#eaea00" font-size="8" textLength="11" lengthAdjust="spacingAndGlyphs" >F1+</text><text transform="translate(737.4 804.0)" fill="#eaea00" font-size="8" textLength="11" lengthAdjust="spacingAndGlyphs" >A1+</text><text transform="translate(791.7 803.8)" fill="#eaea00" font-size="8" textLength="12.5" lengthAdjust="spacingAndGlyphs" >B2−</text><text transform="translate(735.0 781.6) scale(0.8 1)" fill="#12d6d6" font-size="10" text-anchor="start" >X13</text><text transform="translate(790.0 781.6) scale(0.8 1)" fill="#12d6d6" font-size="10" text-anchor="start" >X13</text><text transform="translate(753.1 757.2) rotate(-90) scale(0.82 1)" fill="#eaea00" font-size="9" text-anchor="start" >23.9</text><text transform="translate(808.3 758.5) rotate(-90) scale(0.82 1)" fill="#eaea00" font-size="9" text-anchor="start" >23.13</text><text transform="translate(754.6 793.0) rotate(-90) scale(0.82 1)" fill="#eaea00" font-size="7" text-anchor="start" >1</text><text transform="translate(809.8 793.0) rotate(-90) scale(0.82 1)" fill="#eaea00" font-size="7" text-anchor="start" >2</text><circle cx="812.2" cy="398.8" r="2.9" fill="none" stroke="#eaea00" stroke-width="1.2"/><path d="M806.4 398.8 h11.6 M812.2 393.0 v11.6" stroke="#eaea00" stroke-width="1.2"/><circle cx="432.4" cy="357.4" r="2.9" fill="none" stroke="#eaea00" stroke-width="1.2"/><path d="M426.6 357.4 h11.6 M432.4 351.6 v11.6" stroke="#eaea00" stroke-width="1.2"/><path d="M421 357.4 h8 M429.500 352.800 l-5.500 4.600 l5.500 4.600 M432.400 352.400 l-6 5 l6 5" fill="none" stroke="#eaea00" stroke-width="1.100"/><circle cx="494.7" cy="357.4" r="3" fill="#14dc14"/><circle cx="757.0" cy="440.4" r="3" fill="#14dc14"/><circle cx="784.6" cy="467.8" r="3" fill="#14dc14"/><circle cx="522.4" cy="384.8" r="2.9" fill="none" stroke="#eaea00" stroke-width="1.2"/><path d="M516.6 384.8 h11.6 M522.4 379.0 v11.6" stroke="#eaea00" stroke-width="1.2"/><circle cx="494.7" cy="440.4" r="2.9" fill="none" stroke="#eaea00" stroke-width="1.2"/><path d="M488.9 440.4 h11.6 M494.7 434.6 v11.6" stroke="#eaea00" stroke-width="1.2"/><circle cx="522.4" cy="440.4" r="2.9" fill="none" stroke="#eaea00" stroke-width="1.2"/><path d="M516.6 440.4 h11.6 M522.4 434.6 v11.6" stroke="#eaea00" stroke-width="1.2"/><circle cx="494.7" cy="509.5" r="2.9" fill="none" stroke="#eaea00" stroke-width="1.2"/><path d="M488.9 509.5 h11.6 M494.7 503.7 v11.6" stroke="#eaea00" stroke-width="1.2"/><circle cx="757.0" cy="522.6" r="2.9" fill="none" stroke="#eaea00" stroke-width="1.2"/><path d="M751.2 522.6 h11.6 M757.0 516.8 v11.6" stroke="#eaea00" stroke-width="1.2"/><circle cx="784.6" cy="522.6" r="2.9" fill="none" stroke="#eaea00" stroke-width="1.2"/><path d="M778.8 522.6 h11.6 M784.6 516.8 v11.6" stroke="#eaea00" stroke-width="1.2"/><circle cx="812.2" cy="522.6" r="2.9" fill="none" stroke="#eaea00" stroke-width="1.2"/><path d="M806.4 522.6 h11.6 M812.2 516.8 v11.6" stroke="#eaea00" stroke-width="1.2"/><circle cx="563.7" cy="522.6" r="2.9" fill="none" stroke="#e01010" stroke-width="1.2"/><path d="M557.9 522.6 h11.6 M563.7 516.8 v11.6" stroke="#e01010" stroke-width="1.2"/><circle cx="881.2" cy="522.6" r="2.9" fill="none" stroke="#e01010" stroke-width="1.2"/><path d="M875.4 522.6 h11.6 M881.2 516.8 v11.6" stroke="#e01010" stroke-width="1.2"/><circle cx="1155.8" cy="522.6" r="2.9" fill="none" stroke="#e01010" stroke-width="1.2"/><path d="M1150.0 522.6 h11.6 M1155.8 516.8 v11.6" stroke="#e01010" stroke-width="1.2"/><circle cx="1088.2" cy="522.6" r="2.9" fill="none" stroke="#eaea00" stroke-width="1.2"/><path d="M1082.4 522.6 h11.6 M1088.2 516.8 v11.6" stroke="#eaea00" stroke-width="1.2"/><circle cx="1115.7" cy="522.6" r="2.9" fill="none" stroke="#eaea00" stroke-width="1.2"/><path d="M1109.9 522.6 h11.6 M1115.7 516.8 v11.6" stroke="#eaea00" stroke-width="1.2"/><circle cx="494.7" cy="715.6" r="2.9" fill="none" stroke="#eaea00" stroke-width="1.2"/><path d="M488.9 715.6 h11.6 M494.7 709.8 v11.6" stroke="#eaea00" stroke-width="1.2"/><circle cx="522.4" cy="715.6" r="2.9" fill="none" stroke="#eaea00" stroke-width="1.2"/><path d="M516.6 715.6 h11.6 M522.4 709.8 v11.6" stroke="#eaea00" stroke-width="1.2"/><circle cx="757.0" cy="715.6" r="2.9" fill="none" stroke="#eaea00" stroke-width="1.2"/><path d="M751.2 715.6 h11.6 M757.0 709.8 v11.6" stroke="#eaea00" stroke-width="1.2"/><circle cx="812.2" cy="715.6" r="2.9" fill="none" stroke="#eaea00" stroke-width="1.2"/><path d="M806.4 715.6 h11.6 M812.2 709.8 v11.6" stroke="#eaea00" stroke-width="1.2"/><circle cx="757.0" cy="564.4" r="2.9" fill="none" stroke="#eaea00" stroke-width="1.2"/><path d="M751.2 564.4 h11.6 M757.0 558.6 v11.6" stroke="#eaea00" stroke-width="1.2"/><circle cx="770.2" cy="564.4" r="2.9" fill="none" stroke="#eaea00" stroke-width="1.2"/><path d="M764.4 564.4 h11.6 M770.2 558.6 v11.6" stroke="#eaea00" stroke-width="1.2"/><circle cx="687.0" cy="798.6" r="3" fill="#14dc14"/><circle cx="757.0" cy="785.5" r="3" fill="#14dc14"/><circle cx="812.2" cy="785.5" r="3" fill="#14dc14"/></g></svg>
<div class="t" style="left:409.0px;top:258.3px;color:#d4d7dc;transform:scaleX(1.040);">[−][Top][2D Wireframe]</div>
<div style="left:406px;top:955px;width:752px;height:31px;background:#3b4453;"></div>
<div style="left:406px;top:955px;width:18.5px;height:32.6px;background:#2b3240;border-radius:0 0 3px 3px;"></div>
<div style="left:431px;top:954px;width:726.3px;height:29.3px;background:#ffffff;"></div>
<div style="left:1158px;top:238px;width:760px;height:747px;background:#f0f0f0;"></div>
<div style="left:1158px;top:238px;width:760px;height:37px;background:#ffffff;"></div>
<svg style="left:1166.5px;top:246px;" width="21" height="20" viewBox="0 0 21 20"><rect x="0" y="0" width="20" height="19" fill="#0c0c18"/><rect x="1" y="1" width="18" height="17" fill="#1080e0"/><path d="M1 5 h18 M1 13 h18 M6 1 v17 M14 1 v17" stroke="#cfe8ff" stroke-width="1.2"/><circle cx="7.500" cy="7.500" r="6" fill="#b8d4e8" fill-opacity=".9" stroke="#98a4b4" stroke-width="1.6"/><path d="M12 12 l6.5 6.500" stroke="#d89048" stroke-width="3" stroke-linecap="round"/></svg>
<div class="t" style="left:1191.9px;top:248px;color:#a2a2a2;font-size:16px;text-rendering:geometricPrecision;transform:scaleX(0.927);">Inspector</div>
<svg style="left:1890.5px;top:250px;" width="13" height="13" viewBox="0 0 13 13"><path d="M0.5 0.5 L12 12 M12 0.5 L0.5 12" stroke="#8a8a8a" stroke-width="1.1"/></svg>
<svg style="left:1163.5px;top:281px;" width="20" height="20" viewBox="0 0 20 20"><rect x="0.6" y="0.6" width="14" height="13" fill="#fff" stroke="#1818a8" stroke-width="1.2"/><path d="M4 2 v5 M1.5 4.500 h5 M2.3 2.800 l3.400 3.400 M5.700 2.800 l-3.400 3.400" stroke="#202020" stroke-width=".8"/><path d="M6.5 5.5 h3 v3.500 h1.500 v10 h-6 v-10 h1.500z M14.5 5.5 h3 v3.500 h1.500 v10 h-6 v-10 h1.500z M10.5 10 h3 v4 h-3z" fill="#0c0c0c"/><rect x="6.2" y="14.5" width="1.800" height="3.200" fill="#f4f4f4"/><rect x="14.2" y="14.5" width="1.800" height="3.200" fill="#f4f4f4"/></svg>
<svg style="left:1193.5px;top:280px;" width="20" height="21" viewBox="0 0 20 21"><rect x="1" y="8" width="17" height="12" fill="#f4f040" stroke="#101010" stroke-width="1.4"/><path d="M3 16 h4 v-4 M9 17 h3 M14 17 a1.500 1.500 0 1 0 0.100 0" fill="none" stroke="#707020" stroke-width="1.2"/><path d="M9 13 l4 -8 l3 1.500 l-4 8z" fill="#f4f040" stroke="#101010" stroke-width="1.2"/><circle cx="14" cy="3" r="2" fill="#c01010"/></svg>
<svg style="left:1222.5px;top:284px;" width="20" height="12" viewBox="0 0 20 12"><path d="M1 1 l9 5 l-9 5z M10 6 h8.500" fill="none" stroke="#c4c4c4" stroke-width="1.2"/></svg>
<div style="left:1249.2px;top:279px;width:1px;height:24px;background:#8e8e8e;"></div>
<div style="left:1289px;top:279px;width:1px;height:24px;background:#8e8e8e;"></div>
<div style="left:1329px;top:279px;width:1px;height:24px;background:#8e8e8e;"></div>
<div style="left:1258px;top:277px;width:29px;height:28px;background:#aabde6;border:1px solid #6f8fdc;box-sizing:border-box;"></div>
<svg style="left:1262px;top:281px;" width="20" height="20" viewBox="0 0 20 20"><rect x="0.600" y="0.600" width="3" height="3" fill="none" stroke="#101010" stroke-width="1.2"/><path d="M2 4 v13.500 h5 M2 6.500 h5 M2 12 h5" fill="none" stroke="#101010" stroke-width="1.3"/><rect x="8" y="5" width="3.200" height="3.200" fill="#f01010"/><rect x="8" y="10.400" width="3.200" height="3.200" fill="#f01010"/><rect x="8" y="15.800" width="3.200" height="3.200" fill="#f01010"/><path d="M13 6.600 h4.500 M13 12 h4.500 M13 17.400 h4.500" stroke="#101010" stroke-width="1.300"/></svg>
<svg style="left:1301.5px;top:281px;" width="20" height="20" viewBox="0 0 20 20"><rect x="0.600" y="0.600" width="14.500" height="13" fill="#fff" stroke="#1818a8" stroke-width="1.200"/><rect x="0.600" y="0.600" width="14.500" height="3.400" fill="#1818a8"/><path d="M2 2.300 h11" stroke="#fff" stroke-width="1" stroke-dasharray="1.500 1.500"/><path d="M3 7 h6" stroke="#101010" stroke-width="1"/><path d="M6.5 5.5 h3 v3.500 h1.500 v10 h-6 v-10 h1.500z M14.5 5.5 h3 v3.500 h1.500 v10 h-6 v-10 h1.500z M10.5 10 h3 v4 h-3z" fill="#0c0c0c"/><rect x="6.2" y="14.5" width="1.800" height="3.200" fill="#f4f4f4"/><rect x="14.2" y="14.5" width="1.800" height="3.200" fill="#f4f4f4"/></svg>
<svg style="left:1341.5px;top:281px;" width="21" height="20" viewBox="0 0 21 20"><rect x="1" y="6" width="14" height="12.500" fill="#f8f8f8" stroke="#101010" stroke-width="1.400"/><path d="M3.500 11 h3 M8 11 h5 M3.500 14.500 h3 M8 14.500 h5" stroke="#101010" stroke-width="1.300"/><path d="M5 6 l5 -4 l4 2 l4 -2.500 v7 l-4 -2 l-4 3z" fill="#b0b0b0" stroke="#404040" stroke-width=".8"/><path d="M17.500 1 l3 1 v6 l-3 1z" fill="#1818c0"/></svg>
<svg style="left:1371.5px;top:281px;" width="20" height="20" viewBox="0 0 20 20"><rect x="1" y="1" width="17" height="17.500" fill="#f8f8f8" stroke="#2878c8" stroke-width="1.200" stroke-dasharray="1.500 1.500"/><rect x="0.500" y="0.500" width="18" height="4" fill="#f4f4f4" stroke="#2878c8" stroke-width="1"/><rect x="1" y="3" width="17" height="2" fill="#103880"/></svg>
<svg style="left:1400.5px;top:282.5px;" width="18" height="18" viewBox="0 0 18 18"><path d="M1.500 1.500 L15 15 M15.500 1.500 L2 15.500" stroke="#101010" stroke-width="2.200" stroke-linecap="round"/><circle cx="16.300" cy="16.300" r=".8" fill="#101010"/></svg>
<div style="left:1158.5px;top:308.5px;width:192.5px;height:650.5px;background:#ffffff;border:1px solid #828790;box-sizing:border-box;"></div>
<svg style="left:1169.5px;top:316.8px;" width="9" height="12" viewBox="0 0 9 12"><path d="M1.200 1 L7 6 L1.200 11" fill="none" stroke="#404040" stroke-width="1.500"/></svg>
<svg style="left:1183px;top:322.8px;" width="4" height="12" viewBox="0 0 4 12"><path d="M0 0.500 h3" stroke="#808080" stroke-width="1" stroke-dasharray="1 1"/><path d="M-10 11 h1" stroke="#808080" stroke-width="1"/></svg>
<svg style="left:1187.5px;top:313.3px;" width="19" height="19" viewBox="0 0 19 19"><path d="M1 1 h17 v13 l-4 4 h-13z" fill="#1888e0"/><path d="M14 18 v-4 h4" fill="#a8d4f8"/><rect x="4" y="4" width="5" height="5" fill="none" stroke="#fff" stroke-width="1.300"/><path d="M6.500 1 v3 M6.500 9 v8 M1 6.500 h3 M9 6.500 h8 M12 3 v8 M3 13 h10" stroke="#fff" stroke-width="1.200"/></svg>
<div class="t" style="left:1212.0px;top:314px;color:#101010;font-size:16px;text-rendering:geometricPrecision;transform:scaleX(0.888);">Desenhos</div>
<svg style="left:1169.5px;top:338.8px;" width="9" height="12" viewBox="0 0 9 12"><path d="M1.200 1 L7 6 L1.200 11" fill="none" stroke="#a6a6a6" stroke-width="1.500"/></svg>
<svg style="left:1183px;top:344.8px;" width="4" height="12" viewBox="0 0 4 12"><path d="M0 0.500 h3" stroke="#808080" stroke-width="1" stroke-dasharray="1 1"/><path d="M-10 11 h1" stroke="#808080" stroke-width="1"/></svg>
<svg style="left:1187.5px;top:335.3px;" width="19" height="19" viewBox="0 0 19 19"><path d="M1.500 1 h10 l5 4 v12 h-15z" fill="#fff" stroke="#606060" stroke-width="1.200"/><path d="M1 18 h16" stroke="#404040" stroke-width="1.600"/><path d="M5 6 h7 M5 9 h7 M5 12 h7 M7 6 v7" stroke="#1818a8" stroke-width="1.300"/></svg>
<div class="t" style="left:1212.0px;top:336px;color:#101010;font-size:16px;text-rendering:geometricPrecision;transform:scaleX(0.875);">Folhas</div>
<svg style="left:1169.5px;top:360.8px;" width="9" height="12" viewBox="0 0 9 12"><path d="M1.200 1 L7 6 L1.200 11" fill="none" stroke="#a6a6a6" stroke-width="1.500"/></svg>
<svg style="left:1183px;top:366.8px;" width="4" height="12" viewBox="0 0 4 12"><path d="M0 0.500 h3" stroke="#808080" stroke-width="1" stroke-dasharray="1 1"/><path d="M-10 11 h1" stroke="#808080" stroke-width="1"/></svg>
<svg style="left:1187.5px;top:357.3px;" width="19" height="19" viewBox="0 0 19 19"><rect x="1" y="1" width="17" height="17" fill="#fff" stroke="#101010" stroke-width="1.400" stroke-dasharray="1.500 1.500"/><rect x="4" y="3.500" width="4" height="2" fill="#e01010"/><rect x="9" y="3.500" width="6" height="2" fill="#1818d0"/><rect x="4" y="7.500" width="3" height="8" fill="#f0e020" stroke="#101010" stroke-width=".800"/><rect x="9" y="7.500" width="7" height="8" fill="#108020" stroke="#101010" stroke-width=".800"/></svg>
<div class="t" style="left:1212.0px;top:358px;color:#101010;font-size:16px;text-rendering:geometricPrecision;transform:scaleX(0.908);">Localizações</div>
<svg style="left:1169.5px;top:382.8px;" width="9" height="12" viewBox="0 0 9 12"><path d="M1.200 1 L7 6 L1.200 11" fill="none" stroke="#a6a6a6" stroke-width="1.500"/></svg>
<svg style="left:1183px;top:388.8px;" width="4" height="12" viewBox="0 0 4 12"><path d="M0 0.500 h3" stroke="#808080" stroke-width="1" stroke-dasharray="1 1"/><path d="M-10 11 h1" stroke="#808080" stroke-width="1"/></svg>
<svg style="left:1187.5px;top:379.3px;" width="19" height="19" viewBox="0 0 19 19"><rect x="0.700" y="2" width="6" height="5" fill="#f4e840" stroke="#101010" stroke-width="1.200"/><path d="M13.500 0.800 l4 3.700 l-4 3.700 l-4 -3.700z" fill="#60e070" stroke="#606060" stroke-width="1"/><path d="M3.500 7 v5 h4 l3 3" fill="none" stroke="#101010" stroke-width="1.200"/><path d="M9.500 14 l3 -2 l2.500 3 l-3 2z" fill="#3050d0" stroke="#101010" stroke-width=".800"/></svg>
<div class="t" style="left:1212.0px;top:380px;color:#101010;font-size:16px;text-rendering:geometricPrecision;transform:scaleX(0.864);">Funções</div>
<svg style="left:1169.5px;top:404.8px;" width="9" height="12" viewBox="0 0 9 12"><path d="M1.200 1 L7 6 L1.200 11" fill="none" stroke="#a6a6a6" stroke-width="1.500"/></svg>
<svg style="left:1183px;top:410.8px;" width="4" height="12" viewBox="0 0 4 12"><path d="M0 0.500 h3" stroke="#808080" stroke-width="1" stroke-dasharray="1 1"/><path d="M-10 11 h1" stroke="#808080" stroke-width="1"/></svg>
<svg style="left:1187.5px;top:401.3px;" width="19" height="19" viewBox="0 0 19 19"><path d="M1.500 14.500 l0 -13.500 l13 13.500z" fill="#1414d0" stroke="#10108a" stroke-width="1"/><path d="M4.500 12 v-4.500 l4.500 4.500z" fill="#ffffff"/><rect x="1" y="15" width="17" height="3.500" fill="#f0f0f0" stroke="#101010" stroke-width="1"/><path d="M3 15 v2 M6 15 v2 M9 15 v2 M12 15 v2 M15 15 v2" stroke="#101010" stroke-width=".800"/><path d="M9 9 l6 -7 l2 1.500 l-6 7z" fill="#f0c020" stroke="#604010" stroke-width=".600"/><circle cx="16.500" cy="2" r="1.500" fill="#e01010"/></svg>
<div class="t" style="left:1212.0px;top:402px;color:#101010;font-size:16px;text-rendering:geometricPrecision;transform:scaleX(0.968);">Tipologias</div>
<svg style="left:1173px;top:421.8px;" width="14" height="12" viewBox="0 0 14 12"><path d="M0.500 0 v11.500 h13" fill="none" stroke="#808080" stroke-width="1" stroke-dasharray="1 1"/></svg>
<svg style="left:1187.5px;top:423.3px;" width="19" height="19" viewBox="0 0 19 19"><path d="M1 1 h17 l-6.500 8 v9 h-4 v-9z" fill="#fff" stroke="#101010" stroke-width="1.400"/></svg>
<div style="left:1212px;top:424px;width:136.5px;height:22px;overflow:hidden"><div class="t" style="left:0;top:0;color:#101010;font-size:16px;text-rendering:geometricPrecision;transform:scaleX(0.939)">Filtros de utilizadores</div></div>
<div style="left:1159.5px;top:938px;width:190.5px;height:20px;background:#f0f0f0;"></div>
<div style="left:1181px;top:939.5px;width:142px;height:17px;background:#cdcdcd;"></div>
<svg style="left:1166px;top:942px;" width="8" height="11" viewBox="0 0 8 11"><path d="M6 0.800 L1.400 5.500 L6 10.200" fill="none" stroke="#505050" stroke-width="1.700"/></svg>
<svg style="left:1334.5px;top:942px;" width="8" height="11" viewBox="0 0 8 11"><path d="M1.400 0.800 L6 5.500 L1.400 10.200" fill="none" stroke="#505050" stroke-width="1.700"/></svg>
<div style="left:1356px;top:308.5px;width:562px;height:650.5px;background:#ffffff;border:1px solid #828790;box-sizing:border-box;"></div>
<div class="t" style="left:1395.8px;top:316px;color:#101010;font-size:16px;text-rendering:geometricPrecision;transform:scaleX(0.823);">Sig...</div>
<div class="t" style="left:1439.2px;top:316px;color:#101010;font-size:16px;text-rendering:geometricPrecision;transform:scaleX(0.914);">Descrição</div>
<div class="t" style="left:1563.7px;top:316px;color:#101010;font-size:16px;text-rendering:geometricPrecision;transform:scaleX(0.896);">Posição</div>
<div class="t" style="left:1625.7px;top:316px;color:#101010;font-size:16px;text-rendering:geometricPrecision;transform:scaleX(0.871);">Locali...</div>
<div class="t" style="left:1687.5px;top:316px;color:#101010;font-size:16px;text-rendering:geometricPrecision;transform:scaleX(0.881);">Função</div>
<div class="t" style="left:1749.8px;top:316px;color:#101010;font-size:16px;text-rendering:geometricPrecision;transform:scaleX(0.949);">Bloco</div>
<div class="t" style="left:1824.4px;top:316px;color:#101010;font-size:16px;text-rendering:geometricPrecision;transform:scaleX(0.889);">Códig...</div>
<div style="left:1886px;top:315px;width:9.500px;height:20px;overflow:hidden"><div class="t" style="left:0;top:1px;color:#101010;font-size:16px;text-rendering:geometricPrecision;transform:scaleX(.93)">C</div></div>
<div style="left:1432.5px;top:310px;width:1px;height:26px;background:#e3e3e3;"></div>
<div style="left:1557.5px;top:310px;width:1px;height:26px;background:#e3e3e3;"></div>
<div style="left:1619.5px;top:310px;width:1px;height:26px;background:#e3e3e3;"></div>
<div style="left:1681.4px;top:310px;width:1px;height:26px;background:#e3e3e3;"></div>
<div style="left:1743.3px;top:310px;width:1px;height:26px;background:#e3e3e3;"></div>
<div style="left:1818.5px;top:310px;width:1px;height:26px;background:#e3e3e3;"></div>
<div style="left:1880.3px;top:310px;width:1px;height:26px;background:#e3e3e3;"></div>
<svg style="left:1368.5px;top:319px;" width="11" height="9" viewBox="0 0 11 9"><path d="M9.500 1 H2 L5 8" fill="none" stroke="#9a9a9a" stroke-width="1.200"/></svg>
<div style="left:1358.3px;top:553.5px;width:536.7px;height:23px;background:#d9d9d9;"></div>
<svg style="left:1363px;top:340.3px;" width="17" height="18" viewBox="0 0 17 18"><rect x="0.500" y="0.500" width="16" height="16" fill="#2858b8"/><rect x="1.500" y="1.500" width="6.300" height="9" fill="#9aa8b8"/><rect x="9.200" y="1.500" width="6.300" height="9" fill="#9aa8b8"/><rect x="2.500" y="2" width="4" height="2.500" fill="#f0e040"/><rect x="10.200" y="2" width="4" height="2.500" fill="#f0e040"/><path d="M1.500 10.500 h6.300 v5 h-6.300z M9.200 10.500 h6.300 v5 h-6.300z" fill="#10108a"/><path d="M3.300 13 h2.600 M11 13 h2.600" stroke="#d8e0f0" stroke-width="1.200"/><path d="M0 17 l2 -1.500 M17 17 l-2 -1.500" stroke="#2858b8" stroke-width="1.500"/></svg>
<div class="t" style="left:1383.8px;top:341px;color:#101010;font-size:16px;text-rendering:geometricPrecision;transform:scaleX(0.893);">Q21</div>
<div class="t" style="left:1443.4px;top:341px;color:#101010;font-size:16px;text-rendering:geometricPrecision;transform:scaleX(0.855);">(C)</div>
<div class="t" style="left:1564.0px;top:341px;color:#101010;font-size:16px;text-rendering:geometricPrecision;transform:scaleX(0.969);">112/A2</div>
<div class="t" style="left:1749.8px;top:341px;color:#101010;font-size:16px;text-rendering:geometricPrecision;transform:scaleX(0.903);">MBH-M...</div>
<svg style="left:1363.3px;top:362.7px;" width="18" height="20" viewBox="0 0 18 20"><rect x="1.500" y="8" width="12" height="7.500" fill="#d8e4f8" stroke="#2890e0" stroke-width="1.600"/><path d="M7.500 4 v4 M7.500 15.500 v3.500" stroke="#2890e0" stroke-width="1.600"/></svg>
<div class="t" style="left:1372.0px;top:356.7px;color:#8a1a1a;font-size:8.5px;font-weight:bold;transform:scaleX(1.000);">KI</div>
<div class="t" style="left:1383.8px;top:365px;color:#101010;font-size:16px;text-rendering:geometricPrecision;transform:scaleX(0.893);">Q21</div>
<div class="t" style="left:1443.4px;top:365px;color:#101010;font-size:16px;text-rendering:geometricPrecision;transform:scaleX(0.855);">(C)</div>
<div class="t" style="left:1564.0px;top:365px;color:#101010;font-size:16px;text-rendering:geometricPrecision;transform:scaleX(0.913);">18/C7</div>
<div class="t" style="left:1749.8px;top:365px;color:#101010;font-size:16px;text-rendering:geometricPrecision;transform:scaleX(0.854);">071310...</div>
<div class="t" style="left:1824.5px;top:365px;color:#101010;font-size:16px;text-rendering:geometricPrecision;transform:scaleX(0.859);">MBH...</div>
<svg style="left:1363px;top:388.3px;" width="17" height="18" viewBox="0 0 17 18"><rect x="0.500" y="0.500" width="16" height="16" fill="#2858b8"/><rect x="1.500" y="1.500" width="6.300" height="9" fill="#9aa8b8"/><rect x="9.200" y="1.500" width="6.300" height="9" fill="#9aa8b8"/><rect x="2.500" y="2" width="4" height="2.500" fill="#f0e040"/><rect x="10.200" y="2" width="4" height="2.500" fill="#f0e040"/><path d="M1.500 10.500 h6.300 v5 h-6.300z M9.200 10.500 h6.300 v5 h-6.300z" fill="#10108a"/><path d="M3.300 13 h2.600 M11 13 h2.600" stroke="#d8e0f0" stroke-width="1.200"/><path d="M0 17 l2 -1.500 M17 17 l-2 -1.500" stroke="#2858b8" stroke-width="1.500"/></svg>
<div class="t" style="left:1383.8px;top:389px;color:#101010;font-size:16px;text-rendering:geometricPrecision;transform:scaleX(0.893);">Q22</div>
<div class="t" style="left:1443.4px;top:389px;color:#101010;font-size:16px;text-rendering:geometricPrecision;transform:scaleX(0.929);">Disjuntor Mot...</div>
<div class="t" style="left:1564.0px;top:389px;color:#101010;font-size:16px;text-rendering:geometricPrecision;transform:scaleX(0.932);">112/C4</div>
<div class="t" style="left:1749.8px;top:389px;color:#101010;font-size:16px;text-rendering:geometricPrecision;transform:scaleX(0.903);">MBH-M...</div>
<svg style="left:1363.3px;top:410.7px;" width="18" height="20" viewBox="0 0 18 20"><rect x="1.500" y="8" width="12" height="7.500" fill="#d8e4f8" stroke="#2890e0" stroke-width="1.600"/><path d="M7.500 4 v4 M7.500 15.500 v3.500" stroke="#2890e0" stroke-width="1.600"/></svg>
<div class="t" style="left:1372.0px;top:404.7px;color:#8a1a1a;font-size:8.5px;font-weight:bold;transform:scaleX(1.000);">KI</div>
<div class="t" style="left:1383.8px;top:413px;color:#101010;font-size:16px;text-rendering:geometricPrecision;transform:scaleX(0.893);">Q22</div>
<div class="t" style="left:1443.4px;top:413px;color:#101010;font-size:16px;text-rendering:geometricPrecision;transform:scaleX(0.929);">Disjuntor Mot...</div>
<div class="t" style="left:1564.0px;top:413px;color:#101010;font-size:16px;text-rendering:geometricPrecision;transform:scaleX(0.933);">19/B2</div>
<div class="t" style="left:1749.8px;top:413px;color:#101010;font-size:16px;text-rendering:geometricPrecision;transform:scaleX(0.854);">071310...</div>
<div class="t" style="left:1824.5px;top:413px;color:#101010;font-size:16px;text-rendering:geometricPrecision;transform:scaleX(0.859);">MBH...</div>
<div class="t" style="left:1886.5px;top:413px;color:#101010;font-size:16px;text-rendering:geometricPrecision;transform:scaleX(0.899);">4</div>
<svg style="left:1363px;top:436.3px;" width="17" height="18" viewBox="0 0 17 18"><rect x="0.500" y="0.500" width="16" height="16" fill="#2858b8"/><rect x="1.500" y="1.500" width="6.300" height="9" fill="#9aa8b8"/><rect x="9.200" y="1.500" width="6.300" height="9" fill="#9aa8b8"/><rect x="2.500" y="2" width="4" height="2.500" fill="#f0e040"/><rect x="10.200" y="2" width="4" height="2.500" fill="#f0e040"/><path d="M1.500 10.500 h6.300 v5 h-6.300z M9.200 10.500 h6.300 v5 h-6.300z" fill="#10108a"/><path d="M3.300 13 h2.600 M11 13 h2.600" stroke="#d8e0f0" stroke-width="1.200"/><path d="M0 17 l2 -1.500 M17 17 l-2 -1.500" stroke="#2858b8" stroke-width="1.500"/></svg>
<div class="t" style="left:1383.8px;top:437px;color:#101010;font-size:16px;text-rendering:geometricPrecision;transform:scaleX(0.893);">Q23</div>
<div class="t" style="left:1443.4px;top:437px;color:#101010;font-size:16px;text-rendering:geometricPrecision;transform:scaleX(0.929);">Disjuntor Mot...</div>
<div class="t" style="left:1564.0px;top:437px;color:#101010;font-size:16px;text-rendering:geometricPrecision;transform:scaleX(0.932);">112/C4</div>
<div class="t" style="left:1749.8px;top:437px;color:#101010;font-size:16px;text-rendering:geometricPrecision;transform:scaleX(0.903);">MBH-M...</div>
<svg style="left:1363.3px;top:458.7px;" width="18" height="20" viewBox="0 0 18 20"><rect x="1.500" y="8" width="12" height="7.500" fill="#d8e4f8" stroke="#2890e0" stroke-width="1.600"/><path d="M7.500 4 v4 M7.500 15.500 v3.500" stroke="#2890e0" stroke-width="1.600"/></svg>
<div class="t" style="left:1372.0px;top:452.7px;color:#8a1a1a;font-size:8.5px;font-weight:bold;transform:scaleX(1.000);">KI</div>
<div class="t" style="left:1383.8px;top:461px;color:#101010;font-size:16px;text-rendering:geometricPrecision;transform:scaleX(0.893);">Q23</div>
<div class="t" style="left:1443.4px;top:461px;color:#101010;font-size:16px;text-rendering:geometricPrecision;transform:scaleX(0.929);">Disjuntor Mot...</div>
<div class="t" style="left:1564.0px;top:461px;color:#101010;font-size:16px;text-rendering:geometricPrecision;transform:scaleX(0.933);">19/B4</div>
<div class="t" style="left:1749.8px;top:461px;color:#101010;font-size:16px;text-rendering:geometricPrecision;transform:scaleX(0.854);">071310...</div>
<div class="t" style="left:1824.5px;top:461px;color:#101010;font-size:16px;text-rendering:geometricPrecision;transform:scaleX(0.859);">MBH...</div>
<div class="t" style="left:1886.5px;top:461px;color:#101010;font-size:16px;text-rendering:geometricPrecision;transform:scaleX(0.899);">4</div>
<svg style="left:1363px;top:484.3px;" width="17" height="18" viewBox="0 0 17 18"><rect x="0.500" y="0.500" width="16" height="16" fill="#2858b8"/><rect x="1.500" y="1.500" width="6.300" height="9" fill="#9aa8b8"/><rect x="9.200" y="1.500" width="6.300" height="9" fill="#9aa8b8"/><rect x="2.500" y="2" width="4" height="2.500" fill="#f0e040"/><rect x="10.200" y="2" width="4" height="2.500" fill="#f0e040"/><path d="M1.500 10.500 h6.300 v5 h-6.300z M9.200 10.500 h6.300 v5 h-6.300z" fill="#10108a"/><path d="M3.300 13 h2.600 M11 13 h2.600" stroke="#d8e0f0" stroke-width="1.200"/><path d="M0 17 l2 -1.500 M17 17 l-2 -1.500" stroke="#2858b8" stroke-width="1.500"/></svg>
<div class="t" style="left:1383.8px;top:485px;color:#101010;font-size:16px;text-rendering:geometricPrecision;transform:scaleX(0.893);">Q24</div>
<div class="t" style="left:1443.4px;top:485px;color:#101010;font-size:16px;text-rendering:geometricPrecision;transform:scaleX(0.929);">Disjuntor Mot...</div>
<div class="t" style="left:1564.0px;top:485px;color:#101010;font-size:16px;text-rendering:geometricPrecision;transform:scaleX(0.932);">112/C4</div>
<div class="t" style="left:1749.8px;top:485px;color:#101010;font-size:16px;text-rendering:geometricPrecision;transform:scaleX(0.903);">MBH-M...</div>
<svg style="left:1363.3px;top:506.7px;" width="18" height="20" viewBox="0 0 18 20"><rect x="1.500" y="8" width="12" height="7.500" fill="#d8e4f8" stroke="#2890e0" stroke-width="1.600"/><path d="M7.500 4 v4 M7.500 15.500 v3.500" stroke="#2890e0" stroke-width="1.600"/></svg>
<div class="t" style="left:1372.0px;top:500.7px;color:#8a1a1a;font-size:8.5px;font-weight:bold;transform:scaleX(1.000);">KI</div>
<div class="t" style="left:1383.8px;top:509px;color:#101010;font-size:16px;text-rendering:geometricPrecision;transform:scaleX(0.893);">Q24</div>
<div class="t" style="left:1443.4px;top:509px;color:#101010;font-size:16px;text-rendering:geometricPrecision;transform:scaleX(0.929);">Disjuntor Mot...</div>
<div class="t" style="left:1564.0px;top:509px;color:#101010;font-size:16px;text-rendering:geometricPrecision;transform:scaleX(0.933);">19/B5</div>
<div class="t" style="left:1749.8px;top:509px;color:#101010;font-size:16px;text-rendering:geometricPrecision;transform:scaleX(0.854);">071310...</div>
<div class="t" style="left:1824.5px;top:509px;color:#101010;font-size:16px;text-rendering:geometricPrecision;transform:scaleX(0.859);">MBH...</div>
<div class="t" style="left:1886.5px;top:509px;color:#101010;font-size:16px;text-rendering:geometricPrecision;transform:scaleX(0.899);">4</div>
<svg style="left:1363.3px;top:530.7px;" width="18" height="20" viewBox="0 0 18 20"><rect x="1.500" y="8" width="12" height="7.500" fill="#d8e4f8" stroke="#2890e0" stroke-width="1.600"/><path d="M7.500 4 v4 M7.500 15.500 v3.500" stroke="#2890e0" stroke-width="1.600"/></svg>
<div class="t" style="left:1372.0px;top:524.7px;color:#8a1a1a;font-size:8.5px;font-weight:bold;transform:scaleX(1.000);">KI</div>
<div class="t" style="left:1383.8px;top:533px;color:#101010;font-size:16px;text-rendering:geometricPrecision;transform:scaleX(0.893);">Q25</div>
<div class="t" style="left:1564.0px;top:533px;color:#101010;font-size:16px;text-rendering:geometricPrecision;transform:scaleX(0.933);">20/B2</div>
<div class="t" style="left:1626.2px;top:533px;color:#101010;font-size:16px;text-rendering:geometricPrecision;transform:scaleX(0.968);">+A2</div>
<div class="t" style="left:1749.8px;top:533px;color:#101010;font-size:16px;text-rendering:geometricPrecision;transform:scaleX(0.854);">071306...</div>
<div class="t" style="left:1824.5px;top:533px;color:#101010;font-size:16px;text-rendering:geometricPrecision;transform:scaleX(0.785);">EF 93...</div>
<svg style="left:1363.3px;top:554.7px;" width="18" height="20" viewBox="0 0 18 20"><rect x="1.500" y="8" width="12" height="7.500" fill="#d8e4f8" stroke="#2890e0" stroke-width="1.600"/><path d="M7.500 4 v4 M7.500 15.500 v3.500" stroke="#2890e0" stroke-width="1.600"/></svg>
<div class="t" style="left:1372.0px;top:548.7px;color:#8a1a1a;font-size:8.5px;font-weight:bold;transform:scaleX(1.000);">KI</div>
<div class="t" style="left:1383.8px;top:557px;color:#101010;font-size:16px;text-rendering:geometricPrecision;transform:scaleX(0.893);">Q26</div>
<div class="t" style="left:1438.2px;top:557px;color:#101010;font-size:16px;text-rendering:geometricPrecision;transform:scaleX(0.896);">4 x 1250</div>
<div class="t" style="left:1564.0px;top:557px;color:#101010;font-size:16px;text-rendering:geometricPrecision;transform:scaleX(0.957);">20/A4</div>
<div class="t" style="left:1626.2px;top:557px;color:#101010;font-size:16px;text-rendering:geometricPrecision;transform:scaleX(0.968);">+A2</div>
<div class="t" style="left:1749.8px;top:557px;color:#101010;font-size:16px;text-rendering:geometricPrecision;transform:scaleX(0.854);">071310...</div>
<div class="t" style="left:1824.5px;top:557px;color:#101010;font-size:16px;text-rendering:geometricPrecision;transform:scaleX(0.859);">MBH...</div>
<svg style="left:1363.3px;top:578.7px;" width="18" height="20" viewBox="0 0 18 20"><rect x="1.500" y="8" width="12" height="7.500" fill="#d8e4f8" stroke="#2890e0" stroke-width="1.600"/><path d="M7.500 4 v4 M7.500 15.500 v3.500" stroke="#2890e0" stroke-width="1.600"/></svg>
<div class="t" style="left:1372.0px;top:572.7px;color:#8a1a1a;font-size:8.5px;font-weight:bold;transform:scaleX(1.000);">KI</div>
<div class="t" style="left:1383.8px;top:581px;color:#101010;font-size:16px;text-rendering:geometricPrecision;transform:scaleX(0.893);">Q27</div>
<div class="t" style="left:1564.0px;top:581px;color:#101010;font-size:16px;text-rendering:geometricPrecision;transform:scaleX(0.957);">24/A3</div>
<div class="t" style="left:1749.8px;top:581px;color:#101010;font-size:16px;text-rendering:geometricPrecision;transform:scaleX(0.854);">071306...</div>
<div class="t" style="left:1824.5px;top:581px;color:#101010;font-size:16px;text-rendering:geometricPrecision;transform:scaleX(0.962);">|</div>
<svg style="left:1363px;top:604.3px;" width="17" height="18" viewBox="0 0 17 18"><rect x="0.500" y="0.500" width="16" height="16" fill="#2858b8"/><rect x="1.500" y="1.500" width="6.300" height="9" fill="#9aa8b8"/><rect x="9.200" y="1.500" width="6.300" height="9" fill="#9aa8b8"/><rect x="2.500" y="2" width="4" height="2.500" fill="#f0e040"/><rect x="10.200" y="2" width="4" height="2.500" fill="#f0e040"/><path d="M1.500 10.500 h6.300 v5 h-6.300z M9.200 10.500 h6.300 v5 h-6.300z" fill="#10108a"/><path d="M3.300 13 h2.600 M11 13 h2.600" stroke="#d8e0f0" stroke-width="1.200"/><path d="M0 17 l2 -1.500 M17 17 l-2 -1.500" stroke="#2858b8" stroke-width="1.500"/></svg>
<div class="t" style="left:1383.8px;top:605px;color:#101010;font-size:16px;text-rendering:geometricPrecision;transform:scaleX(0.893);">Q28</div>
<div class="t" style="left:1438.2px;top:605px;color:#101010;font-size:16px;text-rendering:geometricPrecision;transform:scaleX(0.914);">Mini OS</div>
<div class="t" style="left:1564.0px;top:605px;color:#101010;font-size:16px;text-rendering:geometricPrecision;transform:scaleX(0.969);">112/A4</div>
<div class="t" style="left:1749.8px;top:605px;color:#101010;font-size:16px;text-rendering:geometricPrecision;transform:scaleX(0.878);">MBH-B...</div>
<svg style="left:1363.3px;top:626.7px;" width="18" height="20" viewBox="0 0 18 20"><rect x="1.500" y="8" width="12" height="7.500" fill="#d8e4f8" stroke="#2890e0" stroke-width="1.600"/><path d="M7.500 4 v4 M7.500 15.500 v3.500" stroke="#2890e0" stroke-width="1.600"/></svg>
<div class="t" style="left:1372.0px;top:620.7px;color:#8a1a1a;font-size:8.5px;font-weight:bold;transform:scaleX(1.000);">KI</div>
<div class="t" style="left:1383.8px;top:629px;color:#101010;font-size:16px;text-rendering:geometricPrecision;transform:scaleX(0.893);">Q28</div>
<div class="t" style="left:1438.2px;top:629px;color:#101010;font-size:16px;text-rendering:geometricPrecision;transform:scaleX(0.914);">Mini OS</div>
<div class="t" style="left:1564.0px;top:629px;color:#101010;font-size:16px;text-rendering:geometricPrecision;transform:scaleX(0.933);">28/B2</div>
<div class="t" style="left:1749.8px;top:629px;color:#101010;font-size:16px;text-rendering:geometricPrecision;transform:scaleX(0.854);">072109...</div>
<div class="t" style="left:1824.5px;top:629px;color:#101010;font-size:16px;text-rendering:geometricPrecision;transform:scaleX(0.859);">MBH...</div>
<svg style="left:1363px;top:652.3px;" width="17" height="18" viewBox="0 0 17 18"><rect x="0.500" y="0.500" width="16" height="16" fill="#2858b8"/><rect x="1.500" y="1.500" width="6.300" height="9" fill="#9aa8b8"/><rect x="9.200" y="1.500" width="6.300" height="9" fill="#9aa8b8"/><rect x="2.500" y="2" width="4" height="2.500" fill="#f0e040"/><rect x="10.200" y="2" width="4" height="2.500" fill="#f0e040"/><path d="M1.500 10.500 h6.300 v5 h-6.300z M9.200 10.500 h6.300 v5 h-6.300z" fill="#10108a"/><path d="M3.300 13 h2.600 M11 13 h2.600" stroke="#d8e0f0" stroke-width="1.200"/><path d="M0 17 l2 -1.500 M17 17 l-2 -1.500" stroke="#2858b8" stroke-width="1.500"/></svg>
<div class="t" style="left:1383.8px;top:653px;color:#101010;font-size:16px;text-rendering:geometricPrecision;transform:scaleX(0.893);">Q29</div>
<div class="t" style="left:1443.4px;top:653px;color:#101010;font-size:16px;text-rendering:geometricPrecision;transform:scaleX(0.855);">(C)</div>
<div class="t" style="left:1564.0px;top:653px;color:#101010;font-size:16px;text-rendering:geometricPrecision;transform:scaleX(0.969);">112/A3</div>
<div class="t" style="left:1749.8px;top:653px;color:#101010;font-size:16px;text-rendering:geometricPrecision;transform:scaleX(0.903);">MBH-M...</div>
<svg style="left:1363.3px;top:674.7px;" width="18" height="20" viewBox="0 0 18 20"><rect x="1.500" y="8" width="12" height="7.500" fill="#d8e4f8" stroke="#2890e0" stroke-width="1.600"/><path d="M7.500 4 v4 M7.500 15.500 v3.500" stroke="#2890e0" stroke-width="1.600"/></svg>
<div class="t" style="left:1372.0px;top:668.7px;color:#8a1a1a;font-size:8.5px;font-weight:bold;transform:scaleX(1.000);">KI</div>
<div class="t" style="left:1383.8px;top:677px;color:#101010;font-size:16px;text-rendering:geometricPrecision;transform:scaleX(0.893);">Q29</div>
<div class="t" style="left:1443.4px;top:677px;color:#101010;font-size:16px;text-rendering:geometricPrecision;transform:scaleX(0.855);">(C)</div>
<div class="t" style="left:1564.0px;top:677px;color:#101010;font-size:16px;text-rendering:geometricPrecision;transform:scaleX(0.913);">28/C2</div>
<div class="t" style="left:1749.8px;top:677px;color:#101010;font-size:16px;text-rendering:geometricPrecision;transform:scaleX(0.854);">071310...</div>
<div class="t" style="left:1824.5px;top:677px;color:#101010;font-size:16px;text-rendering:geometricPrecision;transform:scaleX(0.859);">MBH...</div>
<svg style="left:1363px;top:700.3px;" width="17" height="18" viewBox="0 0 17 18"><rect x="0.500" y="0.500" width="16" height="16" fill="#2858b8"/><rect x="1.500" y="1.500" width="6.300" height="9" fill="#9aa8b8"/><rect x="9.200" y="1.500" width="6.300" height="9" fill="#9aa8b8"/><rect x="2.500" y="2" width="4" height="2.500" fill="#f0e040"/><rect x="10.200" y="2" width="4" height="2.500" fill="#f0e040"/><path d="M1.500 10.500 h6.300 v5 h-6.300z M9.200 10.500 h6.300 v5 h-6.300z" fill="#10108a"/><path d="M3.300 13 h2.600 M11 13 h2.600" stroke="#d8e0f0" stroke-width="1.200"/><path d="M0 17 l2 -1.500 M17 17 l-2 -1.500" stroke="#2858b8" stroke-width="1.500"/></svg>
<div class="t" style="left:1383.8px;top:701px;color:#101010;font-size:16px;text-rendering:geometricPrecision;transform:scaleX(0.893);">Q30</div>
<div class="t" style="left:1443.4px;top:701px;color:#101010;font-size:16px;text-rendering:geometricPrecision;transform:scaleX(0.855);">(C)</div>
<div class="t" style="left:1564.0px;top:701px;color:#101010;font-size:16px;text-rendering:geometricPrecision;transform:scaleX(0.969);">112/A3</div>
<div class="t" style="left:1749.8px;top:701px;color:#101010;font-size:16px;text-rendering:geometricPrecision;transform:scaleX(0.903);">MBH-M...</div>
<svg style="left:1363.3px;top:722.7px;" width="18" height="20" viewBox="0 0 18 20"><rect x="1.500" y="8" width="12" height="7.500" fill="#d8e4f8" stroke="#2890e0" stroke-width="1.600"/><path d="M7.500 4 v4 M7.500 15.500 v3.500" stroke="#2890e0" stroke-width="1.600"/></svg>
<div class="t" style="left:1372.0px;top:716.7px;color:#8a1a1a;font-size:8.5px;font-weight:bold;transform:scaleX(1.000);">KI</div>
<div class="t" style="left:1383.8px;top:725px;color:#101010;font-size:16px;text-rendering:geometricPrecision;transform:scaleX(0.893);">Q30</div>
<div class="t" style="left:1443.4px;top:725px;color:#101010;font-size:16px;text-rendering:geometricPrecision;transform:scaleX(0.855);">(C)</div>
<div class="t" style="left:1564.0px;top:725px;color:#101010;font-size:16px;text-rendering:geometricPrecision;transform:scaleX(0.913);">28/C3</div>
<div class="t" style="left:1749.8px;top:725px;color:#101010;font-size:16px;text-rendering:geometricPrecision;transform:scaleX(0.854);">071310...</div>
<div class="t" style="left:1824.5px;top:725px;color:#101010;font-size:16px;text-rendering:geometricPrecision;transform:scaleX(0.859);">MBH...</div>
<svg style="left:1363px;top:748.3px;" width="17" height="18" viewBox="0 0 17 18"><rect x="0.500" y="0.500" width="16" height="16" fill="#2858b8"/><rect x="1.500" y="1.500" width="6.300" height="9" fill="#9aa8b8"/><rect x="9.200" y="1.500" width="6.300" height="9" fill="#9aa8b8"/><rect x="2.500" y="2" width="4" height="2.500" fill="#f0e040"/><rect x="10.200" y="2" width="4" height="2.500" fill="#f0e040"/><path d="M1.500 10.500 h6.300 v5 h-6.300z M9.200 10.500 h6.300 v5 h-6.300z" fill="#10108a"/><path d="M3.300 13 h2.600 M11 13 h2.600" stroke="#d8e0f0" stroke-width="1.200"/><path d="M0 17 l2 -1.500 M17 17 l-2 -1.500" stroke="#2858b8" stroke-width="1.500"/></svg>
<div class="t" style="left:1383.8px;top:749px;color:#101010;font-size:16px;text-rendering:geometricPrecision;transform:scaleX(0.893);">Q31</div>
<div class="t" style="left:1443.4px;top:749px;color:#101010;font-size:16px;text-rendering:geometricPrecision;transform:scaleX(0.855);">(C)</div>
<div class="t" style="left:1564.0px;top:749px;color:#101010;font-size:16px;text-rendering:geometricPrecision;transform:scaleX(0.969);">112/A3</div>
<div class="t" style="left:1749.8px;top:749px;color:#101010;font-size:16px;text-rendering:geometricPrecision;transform:scaleX(0.903);">MBH-M...</div>
<svg style="left:1363.3px;top:770.7px;" width="18" height="20" viewBox="0 0 18 20"><rect x="1.500" y="8" width="12" height="7.500" fill="#d8e4f8" stroke="#2890e0" stroke-width="1.600"/><path d="M7.500 4 v4 M7.500 15.500 v3.500" stroke="#2890e0" stroke-width="1.600"/></svg>
<div class="t" style="left:1372.0px;top:764.7px;color:#8a1a1a;font-size:8.5px;font-weight:bold;transform:scaleX(1.000);">KI</div>
<div class="t" style="left:1383.8px;top:773px;color:#101010;font-size:16px;text-rendering:geometricPrecision;transform:scaleX(0.893);">Q31</div>
<div class="t" style="left:1443.4px;top:773px;color:#101010;font-size:16px;text-rendering:geometricPrecision;transform:scaleX(0.855);">(C)</div>
<div class="t" style="left:1564.0px;top:773px;color:#101010;font-size:16px;text-rendering:geometricPrecision;transform:scaleX(0.913);">28/C4</div>
<div class="t" style="left:1749.8px;top:773px;color:#101010;font-size:16px;text-rendering:geometricPrecision;transform:scaleX(0.854);">071310...</div>
<div class="t" style="left:1824.5px;top:773px;color:#101010;font-size:16px;text-rendering:geometricPrecision;transform:scaleX(0.859);">MBH...</div>
<svg style="left:1363px;top:796.3px;" width="17" height="18" viewBox="0 0 17 18"><rect x="0.500" y="0.500" width="16" height="16" fill="#2858b8"/><rect x="1.500" y="1.500" width="6.300" height="9" fill="#9aa8b8"/><rect x="9.200" y="1.500" width="6.300" height="9" fill="#9aa8b8"/><rect x="2.500" y="2" width="4" height="2.500" fill="#f0e040"/><rect x="10.200" y="2" width="4" height="2.500" fill="#f0e040"/><path d="M1.500 10.500 h6.300 v5 h-6.300z M9.200 10.500 h6.300 v5 h-6.300z" fill="#10108a"/><path d="M3.300 13 h2.600 M11 13 h2.600" stroke="#d8e0f0" stroke-width="1.200"/><path d="M0 17 l2 -1.500 M17 17 l-2 -1.500" stroke="#2858b8" stroke-width="1.500"/></svg>
<div class="t" style="left:1383.8px;top:797px;color:#101010;font-size:16px;text-rendering:geometricPrecision;transform:scaleX(0.893);">Q32</div>
<div class="t" style="left:1564.0px;top:797px;color:#101010;font-size:16px;text-rendering:geometricPrecision;transform:scaleX(0.969);">112/A4</div>
<div class="t" style="left:1749.8px;top:797px;color:#101010;font-size:16px;text-rendering:geometricPrecision;transform:scaleX(0.878);">MBH-B...</div>
<svg style="left:1363.3px;top:818.7px;" width="18" height="20" viewBox="0 0 18 20"><rect x="1.500" y="8" width="12" height="7.500" fill="#d8e4f8" stroke="#2890e0" stroke-width="1.600"/><path d="M7.500 4 v4 M7.500 15.500 v3.500" stroke="#2890e0" stroke-width="1.600"/></svg>
<div class="t" style="left:1372.0px;top:812.7px;color:#8a1a1a;font-size:8.5px;font-weight:bold;transform:scaleX(1.000);">KI</div>
<div class="t" style="left:1383.8px;top:821px;color:#101010;font-size:16px;text-rendering:geometricPrecision;transform:scaleX(0.893);">Q32</div>
<div class="t" style="left:1564.0px;top:821px;color:#101010;font-size:16px;text-rendering:geometricPrecision;transform:scaleX(0.957);">28/A5</div>
<div class="t" style="left:1749.8px;top:821px;color:#101010;font-size:16px;text-rendering:geometricPrecision;transform:scaleX(0.854);">072108...</div>
<div class="t" style="left:1824.5px;top:821px;color:#101010;font-size:16px;text-rendering:geometricPrecision;transform:scaleX(0.859);">MBH...</div>
<svg style="left:1363px;top:844.3px;" width="17" height="18" viewBox="0 0 17 18"><rect x="0.500" y="0.500" width="16" height="16" fill="#2858b8"/><rect x="1.500" y="1.500" width="6.300" height="9" fill="#9aa8b8"/><rect x="9.200" y="1.500" width="6.300" height="9" fill="#9aa8b8"/><rect x="2.500" y="2" width="4" height="2.500" fill="#f0e040"/><rect x="10.200" y="2" width="4" height="2.500" fill="#f0e040"/><path d="M1.500 10.500 h6.300 v5 h-6.300z M9.200 10.500 h6.300 v5 h-6.300z" fill="#10108a"/><path d="M3.300 13 h2.600 M11 13 h2.600" stroke="#d8e0f0" stroke-width="1.200"/><path d="M0 17 l2 -1.500 M17 17 l-2 -1.500" stroke="#2858b8" stroke-width="1.500"/></svg>
<div class="t" style="left:1383.8px;top:845px;color:#101010;font-size:16px;text-rendering:geometricPrecision;transform:scaleX(0.893);">Q33</div>
<div class="t" style="left:1564.0px;top:845px;color:#101010;font-size:16px;text-rendering:geometricPrecision;transform:scaleX(0.969);">112/A3</div>
<div class="t" style="left:1749.8px;top:845px;color:#101010;font-size:16px;text-rendering:geometricPrecision;transform:scaleX(0.903);">MBH-M...</div>
<svg style="left:1363.3px;top:866.7px;" width="18" height="20" viewBox="0 0 18 20"><rect x="1.500" y="8" width="12" height="7.500" fill="#d8e4f8" stroke="#2890e0" stroke-width="1.600"/><path d="M7.500 4 v4 M7.500 15.500 v3.500" stroke="#2890e0" stroke-width="1.600"/></svg>
<div class="t" style="left:1372.0px;top:860.7px;color:#8a1a1a;font-size:8.5px;font-weight:bold;transform:scaleX(1.000);">KI</div>
<div class="t" style="left:1383.8px;top:869px;color:#101010;font-size:16px;text-rendering:geometricPrecision;transform:scaleX(0.893);">Q33</div>
<div class="t" style="left:1564.0px;top:869px;color:#101010;font-size:16px;text-rendering:geometricPrecision;transform:scaleX(0.913);">28/C5</div>
<div class="t" style="left:1749.8px;top:869px;color:#101010;font-size:16px;text-rendering:geometricPrecision;transform:scaleX(0.854);">071310...</div>
<div class="t" style="left:1824.5px;top:869px;color:#101010;font-size:16px;text-rendering:geometricPrecision;transform:scaleX(0.859);">MBH...</div>
<svg style="left:1363px;top:892.3px;" width="17" height="18" viewBox="0 0 17 18"><rect x="0.500" y="0.500" width="16" height="16" fill="#2858b8"/><rect x="1.500" y="1.500" width="6.300" height="9" fill="#9aa8b8"/><rect x="9.200" y="1.500" width="6.300" height="9" fill="#9aa8b8"/><rect x="2.500" y="2" width="4" height="2.500" fill="#f0e040"/><rect x="10.200" y="2" width="4" height="2.500" fill="#f0e040"/><path d="M1.500 10.500 h6.300 v5 h-6.300z M9.200 10.500 h6.300 v5 h-6.300z" fill="#10108a"/><path d="M3.300 13 h2.600 M11 13 h2.600" stroke="#d8e0f0" stroke-width="1.200"/><path d="M0 17 l2 -1.500 M17 17 l-2 -1.500" stroke="#2858b8" stroke-width="1.500"/></svg>
<div class="t" style="left:1383.8px;top:893px;color:#101010;font-size:16px;text-rendering:geometricPrecision;transform:scaleX(0.893);">Q34</div>
<div class="t" style="left:1443.4px;top:893px;color:#101010;font-size:16px;text-rendering:geometricPrecision;transform:scaleX(0.855);">(C)</div>
<div class="t" style="left:1564.0px;top:893px;color:#101010;font-size:16px;text-rendering:geometricPrecision;transform:scaleX(0.969);">112/A3</div>
<div class="t" style="left:1749.8px;top:893px;color:#101010;font-size:16px;text-rendering:geometricPrecision;transform:scaleX(0.903);">MBH-M...</div>
<svg style="left:1363.3px;top:914.7px;" width="18" height="20" viewBox="0 0 18 20"><rect x="1.500" y="8" width="12" height="7.500" fill="#d8e4f8" stroke="#2890e0" stroke-width="1.600"/><path d="M7.500 4 v4 M7.500 15.500 v3.500" stroke="#2890e0" stroke-width="1.600"/></svg>
<div class="t" style="left:1372.0px;top:908.7px;color:#8a1a1a;font-size:8.5px;font-weight:bold;transform:scaleX(1.000);">KI</div>
<div class="t" style="left:1383.8px;top:917px;color:#101010;font-size:16px;text-rendering:geometricPrecision;transform:scaleX(0.893);">Q34</div>
<div class="t" style="left:1443.4px;top:917px;color:#101010;font-size:16px;text-rendering:geometricPrecision;transform:scaleX(0.855);">(C)</div>
<div class="t" style="left:1564.0px;top:917px;color:#101010;font-size:16px;text-rendering:geometricPrecision;transform:scaleX(0.913);">28/C7</div>
<div class="t" style="left:1749.8px;top:917px;color:#101010;font-size:16px;text-rendering:geometricPrecision;transform:scaleX(0.854);">071310...</div>
<div class="t" style="left:1824.5px;top:917px;color:#101010;font-size:16px;text-rendering:geometricPrecision;transform:scaleX(0.859);">MBH...</div>
<div style="left:1895.5px;top:309.5px;width:21.5px;height:628.5px;background:#f0f0f0;"></div>
<div style="left:1896.5px;top:786px;width:18px;height:20.5px;background:#cdcdcd;"></div>
<svg style="left:1900.5px;top:320px;" width="11" height="8" viewBox="0 0 11 8"><path d="M0.800 6.500 L5.500 1.800 L10.200 6.500" fill="none" stroke="#505050" stroke-width="1.700"/></svg>
<svg style="left:1900.5px;top:922.5px;" width="11" height="8" viewBox="0 0 11 8"><path d="M0.800 1.300 L5.500 6 L10.200 1.300" fill="none" stroke="#505050" stroke-width="1.700"/></svg>
<div style="left:1357px;top:938px;width:560px;height:20px;background:#f0f0f0;"></div>
<div style="left:1378.8px;top:939.5px;width:317.7px;height:17px;background:#cdcdcd;"></div>
<svg style="left:1363.5px;top:942px;" width="8" height="11" viewBox="0 0 8 11"><path d="M6 0.800 L1.400 5.500 L6 10.200" fill="none" stroke="#505050" stroke-width="1.700"/></svg>
<svg style="left:1881px;top:942px;" width="8" height="11" viewBox="0 0 8 11"><path d="M1.400 0.800 L6 5.500 L1.400 10.200" fill="none" stroke="#505050" stroke-width="1.700"/></svg>
<div style="left:1182.3px;top:961px;width:1px;height:23px;background:#d4d4d4;"></div>
<div style="left:1350.6px;top:961px;width:1px;height:23px;background:#d4d4d4;"></div>
<div style="left:1375.7px;top:961px;width:1px;height:23px;background:#d4d4d4;"></div>
<div class="t" style="left:1379.8px;top:966px;color:#101010;font-size:16px;text-rendering:geometricPrecision;transform:scaleX(0.916);">Selecionado: 1</div>
<svg style="left:1905px;top:972px;" width="12" height="12" viewBox="0 0 12 12"><path d="M9 1 h2 v2 h-2z M9 5 h2 v2 h-2z M5 5 h2 v2 h-2z M9 9 h2 v2 h-2z M5 9 h2 v2 h-2z M1 9 h2 v2 h-2z" fill="#b8b8b8"/></svg>
<div style="left:1154.2px;top:806px;width:4px;height:150px;background:#222933;"></div>
<div style="left:1154.2px;top:815.5px;width:3.6px;height:46.8px;background:#909090;"></div>
<div style="left:1154.2px;top:864px;width:3.6px;height:25px;background:#c0c0c0;"></div>
<div style="left:1154.2px;top:899.2px;width:3.6px;height:22.4px;background:#a8a8a8;"></div>
<div style="left:1154.2px;top:921.6px;width:3.6px;height:33px;background:#f0f0f0;"></div>
<div style="left:297.5px;top:804.5px;width:856.7px;height:150.5px;background:#ffffff;box-shadow:0 1px 4px rgba(0,0,0,.45);"></div>
<div style="left:297.5px;top:804.5px;width:856.7px;height:33px;background:#2e3441;"></div>
<svg style="left:323.5px;top:811px;" width="21" height="21" viewBox="0 0 21 21"><g><rect x="2" y="11" width="17" height="9" fill="#dce8f8" stroke="#4f7fbe" stroke-width="1.2"/><path d="M4 17.500 h13" stroke="#4f7fbe" stroke-width="2" stroke-dasharray="3.500 1.500"/><path d="M1 7 l7 -6 v3.500 c6 0 11 3 11 10 c-2 -4 -5 -5 -11 -5 v3.500z" fill="#1e4688" stroke="#9fc0e8" stroke-width=".800"/></g></svg>
<svg style="left:352.5px;top:811px;" width="21" height="21" viewBox="0 0 21 21"><g transform="translate(21 0) scale(-1 1)"><rect x="2" y="11" width="17" height="9" fill="#dce8f8" stroke="#4f7fbe" stroke-width="1.2"/><path d="M4 17.500 h13" stroke="#4f7fbe" stroke-width="2" stroke-dasharray="3.500 1.500"/><path d="M1 7 l7 -6 v3.500 c6 0 11 3 11 10 c-2 -4 -5 -5 -11 -5 v3.500z" fill="#1e4688" stroke="#9fc0e8" stroke-width=".800"/></g></svg>
<div style="left:381px;top:810px;width:1px;height:24px;background:#4a5262;"></div>
<div style="left:479px;top:810px;width:1px;height:24px;background:#4a5262;"></div>
<svg style="left:393px;top:811px;" width="21" height="21" viewBox="0 0 21 21"><path d="M1 3.500 h15 l4 4 v9.500 h-19z" fill="#fcf6b0" stroke="#d8d090" stroke-width="1"/><path d="M16 3.500 v4 h4z" fill="#fffde0"/><path d="M1 17 h19 v2.500 h-19z" fill="#e4e4e0"/><path d="M12 16.500 l6 -6.500 l1.800 1.700 l-6 6.500 l-2.500 .800z" fill="#e8a030" stroke="#806020" stroke-width=".600"/></svg>
<svg style="left:422px;top:811px;" width="20" height="21" viewBox="0 0 20 21"><rect x="1" y="3" width="18" height="17" fill="#8a8a8a"/><path d="M4 1 v6 a1.300 1.300 0 0 0 2.600 0 v-5" fill="none" stroke="#e8e8e8" stroke-width="1"/></svg>
<svg style="left:451px;top:816px;" width="20" height="11" viewBox="0 0 20 11"><rect x="1" y="2" width="10" height="6" rx="3" fill="none" stroke="#8a8a8a" stroke-width="1.400"/><rect x="8" y="2" width="10" height="6" rx="3" fill="none" stroke="#8a8a8a" stroke-width="1.400"/></svg>
<svg style="left:491px;top:810px;" width="21" height="22" viewBox="0 0 21 22"><path d="M2 2 v17 M5.500 2 v17 M9 2 v17" stroke="#2a78c8" stroke-width="2.200"/><path d="M1 2 h12 M1 19 h10" stroke="#e8f0ff" stroke-width="1.200"/><path d="M12 4 a3.500 3.500 0 0 0 2 6 v10 h2.500 v-10 a3.500 3.500 0 0 0 2 -6 v3.500 h-6.500z" fill="#f0f4ff" stroke="#a8c0e0" stroke-width=".600"/></svg>
<div class="t" style="left:663.7px;top:817px;color:#9ba1ab;font-size:16px;text-rendering:geometricPrecision;transform:scaleX(0.964);">Informação artigo</div>
<svg style="left:1127.5px;top:815.5px;" width="14" height="14" viewBox="0 0 14 14"><path d="M0.700 0.700 L13 13 M13 0.700 L0.700 13" stroke="#c4c8d0" stroke-width="1"/></svg>
<div style="left:418.8px;top:839px;width:1px;height:115px;background:#e6e6e6;"></div>
<div style="left:568.8px;top:839px;width:1px;height:115px;background:#e6e6e6;"></div>
<div style="left:819.3px;top:839px;width:1px;height:115px;background:#e6e6e6;"></div>
<div style="left:299px;top:864.5px;width:520px;height:1px;background:#ededed;"></div>
<div style="left:299px;top:888px;width:520px;height:1px;background:#ededed;"></div>
<div style="left:299px;top:912px;width:520px;height:1px;background:#ededed;"></div>
<div style="left:299px;top:936.3px;width:520px;height:1px;background:#ededed;"></div>
<div style="left:820px;top:888px;width:173px;height:1px;background:#ededed;"></div>
<div style="left:820px;top:912px;width:173px;height:1px;background:#ededed;"></div>
<div style="left:820px;top:936.3px;width:173px;height:1px;background:#ededed;"></div>
<div style="left:299.5px;top:865.5px;width:519.5px;height:22px;background:#d9d9d9;"></div>
<div style="left:418.5px;top:865.5px;width:1.5px;height:22px;background:#ffffff;"></div>
<div style="left:568.5px;top:865.5px;width:1.5px;height:22px;background:#ffffff;"></div>
<div class="t" style="left:305.2px;top:844px;color:#101010;font-size:16px;text-rendering:geometricPrecision;transform:scaleX(0.934);">Código princip...</div>
<div class="t" style="left:425.2px;top:844px;color:#101010;font-size:16px;text-rendering:geometricPrecision;transform:scaleX(0.913);">Fabricante</div>
<div class="t" style="left:575.2px;top:844px;color:#101010;font-size:16px;text-rendering:geometricPrecision;transform:scaleX(0.914);">Descrição</div>
<svg style="left:303px;top:869.2px;" width="19" height="17" viewBox="0 0 19 17"><path d="M1 1.500 h17 v14 h-3 l-1.500 -2 l-1.500 2 h-5 l-1.500 -2 l-1.500 2 h-3z" fill="#f4f8ff" stroke="#909aa8" stroke-width="1.200"/><path d="M3.500 5 h3 M8 5 h8 M3.500 8 h3 M8 8 h8 M3.500 11 h3 M8 11 h8" stroke="#3a88e0" stroke-width="1.200"/></svg>
<div class="t" style="left:324.7px;top:870px;color:#101010;font-size:16px;text-rendering:geometricPrecision;transform:scaleX(0.880);">MBH127332...</div>
<div class="t" style="left:425.2px;top:870px;color:#101010;font-size:16px;text-rendering:geometricPrecision;transform:scaleX(0.837);">WEG</div>
<div class="t" style="left:575.2px;top:870px;color:#101010;font-size:16px;text-rendering:geometricPrecision;transform:scaleX(0.924);">Disjuntor em Caixa Moldada ACW...</div>
<div style="left:994px;top:838px;width:1.2px;height:117px;background:#5a6270;"></div>
<svg style="left:1030px;top:839px;" width="78" height="106" viewBox="0 0 78 106"><defs><linearGradient id="bk1" x1="0" x2="1"><stop offset="0" stop-color="#6e6e6e"/><stop offset="1" stop-color="#8a8a8a"/></linearGradient><linearGradient id="bk2" x1="0" x2="1" y1="0" y2="1"><stop offset="0" stop-color="#efefef"/><stop offset="1" stop-color="#d6d6d6"/></linearGradient></defs>
<path d="M4 7.500 L22 5 L23 3.500 L40 2 L41 3.500 L58 1.500 L63.500 2.500 V19 L69 20.500 V25 L16 30 V98 L62 93.500 V98 L58 99.500 L44 100.500 L43 103 L38 103.500 L37 101.500 L27 102.500 L26 105 L20 105.500 L19 103.500 L7 104.500 L4 103z" fill="url(#bk1)"/>
<path d="M4 7.500 V103 L7 104.500 L16 98 V30z" fill="#606060"/>
<path d="M9.500 10.500 L20 9.500 V19.500 L9.500 20.500z M27.500 8.500 L38.500 7.500 V17.500 L27.500 18.500z M46 6.500 L57 5.500 V15.500 L46 16.500z" fill="#b49a5a"/>
<path d="M12 13 L18 12.500 V17 L12 17.500z M30 11 L36 10.500 V15 L30 15.500z M48.500 9 L54.500 8.500 V13 L48.500 13.500z" fill="#3a3428"/>
<path d="M16 28.500 L70 23 L75 24.500 V88 L71 90.500 L18 96.500 L16 94z" fill="url(#bk2)"/>
<path d="M16 28.500 L70 23 L75 24.500 L21 30.500z" fill="#f8f8f8"/>
<path d="M21 30.500 V96 M40 33 V94 M58 31 V92" stroke="#c4c4c4" stroke-width=".800"/>
<path d="M25 41 L35.500 40 V53 L25 54z" fill="#9c9c9c" stroke="#e8e8e8" stroke-width=".600"/>
<path d="M24 36 L37 35 V88 L24 90z" fill="none" stroke="#c8c8c8" stroke-width=".700"/>
<path d="M44 60 L56 59 V84 L46 85.500z" fill="#6c6c6c"/><path d="M46 62 L54 61.500 L52 80 L47 80.500z" fill="#8a8a8a"/>
<path d="M44 88 h9 v2 h-9z" fill="#202020"/>
<path d="M60.500 58 L72 57 V60 L60.500 61z" fill="#404040"/>
<path d="M61 64 h10 M61 67 h10 M61 70 h10 M61 73 h10 M61 76 h8" stroke="#b8b8b8" stroke-width=".900"/>
<rect x="66" y="33" width="5" height="5" fill="#f8f8f8" stroke="#707070" stroke-width=".800"/>
<circle cx="34.500" cy="59" r="1" fill="#e03030"/></svg>
<div style="left:0px;top:985px;width:1918px;height:8px;background:#3b4453;"></div>
<div style="left:0px;top:981px;width:406px;height:5px;background:#3b4453;"></div>
<div style="left:0px;top:993px;width:1918px;height:37px;background:#222933;"></div>
<div style="left:0px;top:1029px;width:1918px;height:1px;background:#55585e;"></div>
<svg style="left:45px;top:992px;" width="100" height="32" viewBox="0 0 100 32"><path d="M6 30.800 L17.500 2.500 Q18.300 1 20 1 L91.500 1 L80.500 30.800z" fill="#3b4453"/></svg>
<svg style="left:19.9px;top:1000.3px;" width="21" height="16" viewBox="0 0 21 16"><rect x="0" y="0" width="20.300" height="2.800" fill="#ececec"/><rect x="0" y="6.400" width="20.300" height="2.800" fill="#ececec"/><rect x="0" y="12.800" width="20.300" height="2.800" fill="#ececec"/></svg>
<div class="t" style="left:72.0px;top:998.7px;color:#ffffff;font-weight:bold;transform:scaleX(1.015);">Model</div>
<div class="t" style="left:145.7px;top:998.7px;color:#e8e8e8;transform:scaleX(0.982);">Layout1</div>
<div class="t" style="left:228.0px;top:998.7px;color:#e8e8e8;transform:scaleX(0.982);">Layout2</div>
<svg style="left:210px;top:998px;" width="10" height="21" viewBox="0 0 10 21"><path d="M0.700 20 L9 0" stroke="#4a5363" stroke-width="1.500"/></svg>
<svg style="left:291px;top:998px;" width="10" height="21" viewBox="0 0 10 21"><path d="M0.700 20 L9 0" stroke="#4a5363" stroke-width="1.500"/></svg>
<svg style="left:342.5px;top:998px;" width="10" height="21" viewBox="0 0 10 21"><path d="M0.700 20 L9 0" stroke="#4a5363" stroke-width="1.500"/></svg>
<svg style="left:313.3px;top:999.5px;" width="18" height="18" viewBox="0 0 18 18"><path d="M9 0 v17.500 M0.200 8.700 h17.600" stroke="#f0f0f0" stroke-width="2"/></svg>
<div style="left:1143.8px;top:995px;width:59.4px;height:29.5px;background:#3b4453;"></div>
<div style="left:1206.3px;top:995px;width:79.7px;height:29.5px;background:#3b4453;"></div>
<div style="left:1289.7px;top:995px;width:128.6px;height:29.5px;background:#3b4453;"></div>
<div style="left:1420.5px;top:995px;width:79.5px;height:29.5px;background:#3b4453;"></div>
<div style="left:1503.9px;top:995px;width:131.3px;height:29.5px;background:#3b4453;"></div>
<div style="left:1637.9px;top:995px;width:50.2px;height:29.5px;background:#3b4453;"></div>
<div style="left:1689.6px;top:995px;width:29.6px;height:29.5px;background:#3b4453;"></div>
<div style="left:1721.9px;top:995px;width:90.3px;height:29.5px;background:#3b4453;"></div>
<div style="left:1814.7px;top:995px;width:38.3px;height:29.5px;background:#3b4453;"></div>
<div style="left:1855.8px;top:995px;width:29.8px;height:29.5px;background:#3b4453;"></div>
<div style="left:1888.3px;top:995px;width:29.7px;height:29.5px;background:#3b4453;"></div>
<div style="left:1206.3px;top:996px;width:28.8px;height:27.5px;background:#5b8cc5;"></div>
<div style="left:1289.7px;top:996px;width:28.6px;height:27.5px;background:#5b8cc5;"></div>
<div style="left:1420.5px;top:996px;width:28.6px;height:27.5px;background:#5b8cc5;"></div>
<div style="left:1503.9px;top:996px;width:27.9px;height:27.5px;background:#5b8cc5;"></div>
<div style="left:1753.9px;top:996px;width:26.9px;height:27.5px;background:#5b8cc5;"></div>
<div class="t" style="left:1148.2px;top:1000.5px;color:#f4f4f4;transform:scaleX(0.956);">MODEL</div>
<svg style="left:1211px;top:1000px;" width="20" height="20" viewBox="0 0 20 20"><path d="M3.500 0.500 v19 M9.800 0.500 v19 M16 0.500 v19 M0 3.800 h19.500 M0 10 h19.500 M0 16.200 h19.500" stroke="#ffffff" stroke-width="1.200"/></svg>
<svg style="left:1243px;top:1002px;" width="16" height="16" viewBox="0 0 16 16"><rect x="0" y="0" width="2.800" height="2.800" fill="#d8d8d8"/><rect x="0" y="6.1" width="2.800" height="2.800" fill="#d8d8d8"/><rect x="0" y="12.2" width="2.800" height="2.800" fill="#d8d8d8"/><rect x="6.2" y="0" width="2.800" height="2.800" fill="#d8d8d8"/><rect x="6.2" y="6.1" width="2.800" height="2.800" fill="#d8d8d8"/><rect x="6.2" y="12.2" width="2.800" height="2.800" fill="#d8d8d8"/><rect x="12.4" y="0" width="2.800" height="2.800" fill="#d8d8d8"/><rect x="12.4" y="6.1" width="2.800" height="2.800" fill="#d8d8d8"/><rect x="12.4" y="12.2" width="2.800" height="2.800" fill="#d8d8d8"/></svg>
<svg style="left:1271.4px;top:1007.2px;" width="10" height="6" viewBox="0 0 10 6"><path d="M0 0 h9.400 l-4.700 5.200z" fill="#d8d8d8"/></svg>
<svg style="left:1293px;top:999.5px;" width="22" height="21" viewBox="0 0 22 21"><path d="M1.300 0.500 V19.700 H20.700 M1.300 14.500 h5.500 v5.200" fill="none" stroke="#ffffff" stroke-width="1.400"/></svg>
<svg style="left:1323px;top:1000px;" width="22" height="20" viewBox="0 0 22 20"><circle cx="9" cy="10.300" r="8" fill="none" stroke="#d8d8d8" stroke-width="1.300"/><path d="M9 10.300 L18.500 1.500 M9 10.300 H20.500" stroke="#d8d8d8" stroke-width="1.300"/></svg>
<svg style="left:1354.3px;top:1007.2px;" width="10" height="6" viewBox="0 0 10 6"><path d="M0 0 h9.400 l-4.700 5.200z" fill="#d8d8d8"/></svg>
<svg style="left:1375px;top:999.5px;" width="18" height="21" viewBox="0 0 18 21"><path d="M9 0.500 V19.500" stroke="#30c060" stroke-width="1.300"/><path d="M1.300 2 L16.300 17.500" stroke="#e04040" stroke-width="1.300"/><rect x="7.200" y="7.800" width="3.600" height="3.600" fill="#3b4453" stroke="#e8e8e8" stroke-width="1"/></svg>
<svg style="left:1404.3px;top:1007.2px;" width="10" height="6" viewBox="0 0 10 6"><path d="M0 0 h9.400 l-4.700 5.200z" fill="#d8d8d8"/></svg>
<svg style="left:1424.5px;top:1000px;" width="22" height="20" viewBox="0 0 22 20"><path d="M1 16.500 H20.500 M1.300 16.500 L15.800 2.500" stroke="#ffffff" stroke-width="1.400"/><rect x="6.500" y="8" width="3.600" height="3.600" fill="#ffffff"/></svg>
<svg style="left:1454px;top:999.5px;" width="22" height="21" viewBox="0 0 22 21"><rect x="3.500" y="4" width="17" height="16" fill="none" stroke="#d8d8d8" stroke-width="1.300"/><rect x="0.700" y="0.700" width="5" height="5" fill="#3b4453" stroke="#f0a060" stroke-width="1.300"/></svg>
<svg style="left:1485.2px;top:1007.2px;" width="10" height="6" viewBox="0 0 10 6"><path d="M0 0 h9.400 l-4.700 5.200z" fill="#d8d8d8"/></svg>
<svg style="left:1508px;top:999.5px;" width="22" height="21" viewBox="0 0 22 21"><path d="M9 1 L12 11 L17.500 18.500 L9 14.500 L0.500 18.500 L6 11z" fill="#ffffff"/><circle cx="18" cy="4" r="3" fill="none" stroke="#ffffff" stroke-width="1.200"/></svg>
<svg style="left:1537.5px;top:999.5px;" width="22" height="21" viewBox="0 0 22 21"><path d="M9 1 L12 11 L17.500 18.500 L9 14.500 L0.500 18.500 L6 11z" fill="#d8d8d8"/><path d="M17 0.500 l-3 5 h2.500 l-2 4.500 l5 -6 h-2.500 l2 -3.500z" fill="#d8d8d8"/></svg>
<svg style="left:1568.5px;top:999.5px;" width="19" height="21" viewBox="0 0 19 21"><path d="M9 1 L12 11 L17.500 18.500 L9 14.500 L0.500 18.500 L6 11z" fill="#d8d8d8"/></svg>
<div class="t" style="left:1598.2px;top:1000.5px;color:#f4f4f4;transform:scaleX(0.839);">1:1</div>
<svg style="left:1620.8px;top:1007.2px;" width="10" height="6" viewBox="0 0 10 6"><path d="M0 0 h9.400 l-4.700 5.200z" fill="#d8d8d8"/></svg>
<svg style="left:1642.5px;top:999.5px;" width="21" height="21" viewBox="0 0 21 21"><g transform="translate(10.300 10.300)"><rect x="-2.300" y="-10.200" width="4.600" height="5" fill="#d8d8d8" transform="rotate(0)"/><rect x="-2.300" y="-10.200" width="4.600" height="5" fill="#d8d8d8" transform="rotate(45)"/><rect x="-2.300" y="-10.200" width="4.600" height="5" fill="#d8d8d8" transform="rotate(90)"/><rect x="-2.300" y="-10.200" width="4.600" height="5" fill="#d8d8d8" transform="rotate(135)"/><rect x="-2.300" y="-10.200" width="4.600" height="5" fill="#d8d8d8" transform="rotate(180)"/><rect x="-2.300" y="-10.200" width="4.600" height="5" fill="#d8d8d8" transform="rotate(225)"/><rect x="-2.300" y="-10.200" width="4.600" height="5" fill="#d8d8d8" transform="rotate(270)"/><rect x="-2.300" y="-10.200" width="4.600" height="5" fill="#d8d8d8" transform="rotate(315)"/><circle r="5.700" fill="none" stroke="#d8d8d8" stroke-width="3.600"/></g></svg>
<svg style="left:1673.6px;top:1007.2px;" width="10" height="6" viewBox="0 0 10 6"><path d="M0 0 h9.400 l-4.700 5.200z" fill="#d8d8d8"/></svg>
<svg style="left:1694px;top:1000px;" width="20" height="20" viewBox="0 0 20 20"><path d="M9.700 0 V19.500 M0 9.700 H19.500" stroke="#f0f0f0" stroke-width="2.200"/></svg>
<svg style="left:1727px;top:999.5px;" width="22" height="21" viewBox="0 0 22 21"><rect x="0.700" y="0.700" width="7" height="7" fill="none" stroke="#d8d8d8" stroke-width="1.200"/><circle cx="15.500" cy="9" r="4.300" fill="none" stroke="#d8d8d8" stroke-width="1.200"/><path d="M7.700 12.500 L12.500 19.500 H2.800z" fill="none" stroke="#d8d8d8" stroke-width="1.200"/></svg>
<svg style="left:1756.5px;top:999px;" width="22" height="22" viewBox="0 0 22 22"><path d="M0.500 1.500 H21.500 M3 7 H19 M7 1.500 V12 M15 1.500 V12" stroke="#ffffff" stroke-width="1.400" fill="none"/><rect x="4" y="12" width="14" height="7" rx="1.500" fill="none" stroke="#ffffff" stroke-width="1.400"/><path d="M7.500 19 v2 M14.500 19 v2" stroke="#fff" stroke-width="1.400"/></svg>
<svg style="left:1787px;top:999.5px;" width="12" height="21" viewBox="0 0 12 21"><path d="M2 1.500 a4.500 4.500 0 0 0 1.500 8 V18 a2 2 0 0 0 4 0 V9.500 a4.500 4.500 0 0 0 1.500 -8 V6 h-3.500 h-3.500z" fill="#d8d8d8"/></svg>
<svg style="left:1798.5px;top:1009px;" width="10" height="6" viewBox="0 0 10 6"><path d="M0 0 h9.400 l-4.700 5.200z" fill="#d8d8d8"/></svg>
<svg style="left:1823.5px;top:999.5px;" width="21" height="21" viewBox="0 0 21 21"><path d="M1 1 h12 l5 5 v13 h-17z" fill="#2e86d8"/><path d="M13 1 v5 h5z" fill="#8ac0f0"/><path d="M1 12 c4 -1 9 0 17 5 v2.500 h-17z" fill="#f0b830"/><circle cx="6" cy="6" r="2" fill="none" stroke="#e8f4ff" stroke-width="1"/><path d="M6 1 v12 M1 6 h12" stroke="#e8f4ff" stroke-width=".900"/><path d="M11 16 l3 3.500 l6 -6.500" fill="none" stroke="#30c060" stroke-width="2"/></svg>
<svg style="left:1861px;top:1002px;" width="21" height="16" viewBox="0 0 21 16"><rect x="0.700" y="0.700" width="19" height="14" fill="none" stroke="#d8d8d8" stroke-width="1.300"/><path d="M11 6.500 L16.500 3 M13 2.800 h3.700 v3.500 M9 8.500 L4 12 M3.500 8.800 v3.500 h3.700" fill="none" stroke="#d8d8d8" stroke-width="1.200"/></svg>
<svg style="left:1892.8px;top:1000.5px;" width="21" height="19" viewBox="0 0 21 19"><rect x="0" y="0" width="20" height="2.600" fill="#ececec"/><rect x="0" y="7.800" width="20" height="2.600" fill="#ececec"/><rect x="0" y="15.600" width="20" height="2.600" fill="#ececec"/></svg>
</div></body></html>
